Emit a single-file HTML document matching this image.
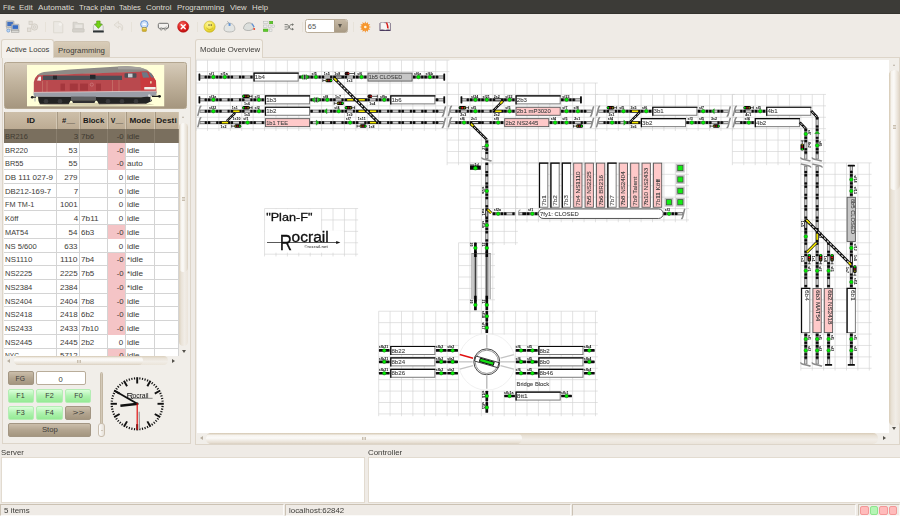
<!DOCTYPE html><html><head><meta charset="utf-8"><title>Rocrail</title><style>
*{box-sizing:border-box;margin:0;padding:0}
html,body{width:900px;height:516px;overflow:hidden;background:#efebe6;font-family:"Liberation Sans",sans-serif;font-size:7.6px;color:#3c3b37}
.abs{position:absolute}
#menubar{left:0;top:0;width:900px;height:14px;background:#3c3b37;border-bottom:1px solid #33322e}
#menubar>span{position:absolute;top:2.6px;color:#dfdbd2;font-size:7.7px;white-space:nowrap}
.tab{position:absolute;border:1px solid #dcd4c7;border-bottom:none;border-radius:3px 3px 0 0;white-space:nowrap;font-size:7.6px}
.tab.sel{background:#f4f1ec;color:#3c3b37}
.tab.unsel{background:linear-gradient(#d8ccb8,#c9bba4);color:#3c3b37;border-color:#cfc3b0}
.frame{position:absolute;border:1px solid #ddd5c9;background:#efebe6}
.btn{position:absolute;border:1px solid #a39683;border-radius:2px;background:linear-gradient(#cbbeab,#b3a590 50%,#a4967f);color:#3c3b37;text-align:center;font-size:7.6px;white-space:nowrap}
.gbtn{position:absolute;border:1px solid #b4edb4;border-radius:2px;background:linear-gradient(#dcffdc,#aef2ae 50%,#95ea95);color:#3c3b37;text-align:center;font-size:7.6px}
.white{position:absolute;background:#fff;border:1px solid #e2dbd0}
.lbl{position:absolute;white-space:nowrap;font-size:7.6px;color:#3c3b37}
.sep{position:absolute;width:1px;top:21.5px;height:10px;background:#e7e2d9}
#lt{position:absolute;left:4px;top:112px;width:175px;height:244.2px;overflow:hidden;background:#fff}
#lt .h{position:absolute;top:0;height:17.1px;background:linear-gradient(#cdbfa9,#bcab93);border-right:1px solid #d3c7b4;border-left:1px solid #a89a84;font-weight:bold;font-size:7.8px;text-align:center;padding-top:4.2px;color:#1a1917;white-space:nowrap;overflow:hidden}
#lt .r{position:absolute;left:0;width:175px;height:13.72px;border-bottom:1px solid #d4d4d4}
#lt .c{position:absolute;top:0;height:13.72px;border-right:1px solid #d4d4d4;padding-top:2.8px;font-size:7.5px;white-space:nowrap;overflow:hidden;color:#3c3b37}
#lt .sel .c{color:#3f3a31;border-right-color:#8a7f6e}
#lt .sel{background:#7a6f5e;border-bottom-color:#7a6f5e}
.sb{position:absolute;background:linear-gradient(90deg,#e4ddd2,#f3f0eb);border-radius:4px;border:1px solid #d6cdbf}
.sbh{position:absolute;background:linear-gradient(#e4ddd2,#f3f0eb);border-radius:4px;border:1px solid #d6cdbf}
.th{position:absolute;background:linear-gradient(90deg,#fdfcfb,#e6dfd5);border-radius:4px;border:1px solid #d4cabb}
.thh{position:absolute;background:linear-gradient(#fdfcfb,#e6dfd5);border-radius:4px;border:1px solid #d4cabb}
.sf{position:absolute;top:504px;height:12px;border:1px solid #cbc2b4;border-right-color:#fbfaf8;border-bottom-color:#fbfaf8;font-size:7.4px;padding:1.3px 0 0 2.5px;color:#3c3b37;white-space:nowrap}
</style></head><body>
<div id="menubar" class="abs">
<span style="left:3px"><span style="display:inline-block;transform-origin:0 50%;transform:scaleX(0.951)">File</span></span>
<span style="left:19px"><span style="display:inline-block;transform-origin:0 50%;transform:scaleX(1.029)">Edit</span></span>
<span style="left:38px"><span style="display:inline-block;transform-origin:0 50%;transform:scaleX(1.056)">Automatic</span></span>
<span style="left:79.3px"><span style="display:inline-block;transform-origin:0 50%;transform:scaleX(1.007)">Track plan</span></span>
<span style="left:119.3px"><span style="display:inline-block;transform-origin:0 50%;transform:scaleX(0.984)">Tables</span></span>
<span style="left:146.3px"><span style="display:inline-block;transform-origin:0 50%;transform:scaleX(1.027)">Control</span></span>
<span style="left:176.8px"><span style="display:inline-block;transform-origin:0 50%;transform:scaleX(1.028)">Programming</span></span>
<span style="left:230px"><span style="display:inline-block;transform-origin:0 50%;transform:scaleX(1.011)">View</span></span>
<span style="left:251.5px"><span style="display:inline-block;transform-origin:0 50%;transform:scaleX(1.015)">Help</span></span>
</div>
<div class="sep" style="left:45px"></div>
<div class="sep" style="left:130.5px"></div>
<div class="sep" style="left:196.5px"></div>
<div class="sep" style="left:301.5px"></div>
<div class="sep" style="left:352.5px"></div>
<div class="abs" style="left:305.2px;top:19.2px;width:42.8px;height:14px;border:1px solid #b9ad9a;border-radius:2.5px;background:#fff;overflow:hidden"><div class="abs" style="left:27.5px;top:0;width:15px;height:12px;background:linear-gradient(#c6b9a5,#a99b85);border-left:1px solid #b0a28d"></div><div class="abs" style="left:32px;top:4.2px;width:0;height:0;border-left:2.6px solid transparent;border-right:2.6px solid transparent;border-top:4px solid #5a554c"></div><div class="abs" style="left:1.6px;top:2.3px;font-size:7.5px;color:#555">65</div></div>
<svg class="abs" style="left:0;top:0" width="900" height="516" viewBox="0 0 900 516"><rect x="6.3" y="21" width="7.6" height="6.2" rx=".6" fill="#c9ccd0" stroke="#8e9399" stroke-width=".6"/><rect x="7.3" y="22" width="5.6" height="4" fill="#3f6fc0"/><rect x="6.8" y="27.6" width="6" height="1.6" fill="#d6d6d2" stroke="#9a9a96" stroke-width=".4"/><rect x="11.6" y="24.3" width="7.3" height="5.6" rx=".6" fill="#d3d6da" stroke="#8e9399" stroke-width=".6"/><rect x="12.5" y="25.2" width="5.5" height="3.7" fill="#356bc4"/><rect x="11.4" y="30.2" width="7.6" height="2" fill="#dcdcd8" stroke="#8f8f8b" stroke-width=".5"/><circle cx="8.3" cy="30.6" r="1.5" fill="#bcd6f3" stroke="#5b8ed0" stroke-width=".6"/><g fill="#e4e0da" stroke="#cfc9c0" stroke-width=".7"><rect x="29" y="21.2" width="3.2" height="3.2"/><rect x="27.5" y="28" width="3.4" height="3.4"/><circle cx="34.5" cy="27" r="3.2"/><circle cx="34.5" cy="27" r="1.1" fill="#efebe6"/></g><path d="M53.6 21.6h6.6l2.6 2.6v8.6h-9.2z" fill="#ebe8e3" stroke="#d9d4cc" stroke-width=".7"/><circle cx="60.3" cy="24.3" r="1.6" fill="#f4f2ee"/><path d="M73 22.2h4l1 1.4h5.4v8.2H73z" fill="#d9d6d0" stroke="#c8c4bc" stroke-width=".6"/><rect x="75.3" y="24.6" width="7" height="3.4" fill="#e8e5e0"/><rect x="72.6" y="28.8" width="11.6" height="3.2" rx=".5" fill="#d5d2cc" stroke="#c5c1b9" stroke-width=".5"/><path d="M93.4 26.2l1.6-2.6h6.6l1.6 2.6v4.6H93.4z" fill="#eeeeec" stroke="#a0a09c" stroke-width=".6"/><rect x="93" y="30.4" width="10.8" height="2.2" rx=".5" fill="#2e3436"/><path d="M96.7 21h3.4v3.3h2.1l-3.8 4.1l-3.8-4.1h2.1z" fill="#73d216" stroke="#4e9a06" stroke-width=".6"/><path d="M118.5 21.3l-4.4 3.6l4.4 3.4v-2c2.3 0 3.4 1.2 3.4 4.2c1.8-3.4.6-6.9-3.4-6.9z" fill="#ebe7e1" stroke="#d8d2c9" stroke-width=".7"/><circle cx="144.3" cy="24.3" r="3.7" fill="#cfe0f7" stroke="#5c8fd6" stroke-width=".9"/><rect x="142.6" y="23.6" width="3.4" height="1.3" rx=".4" fill="#fff"/><rect x="142.2" y="27.6" width="4.2" height="3.8" rx=".6" fill="#d4b32c" stroke="#a88a1a" stroke-width=".5"/><rect x="142.7" y="28" width="3.2" height="1.2" fill="#f1dc7a"/><path d="M159.6 23.3h7.6q1.3 0 1.3 1.3v2.6q0 1.2-1.3 1.2h-7.6q-1.3 0-1.3-1.2v-2.6q0-1.3 1.3-1.3z" fill="#f4f2ef" stroke="#6e6e6c" stroke-width="1"/><circle cx="161.2" cy="29" r="1.1" fill="#f4f2ef" stroke="#6e6e6c" stroke-width=".7"/><circle cx="165.2" cy="29" r="1.1" fill="#f4f2ef" stroke="#6e6e6c" stroke-width=".7"/><path d="M166.3 26.5l1.4 1.4" stroke="#6e6e6c" stroke-width=".6"/><defs><radialGradient id="rg" cx=".4" cy=".3" r=".8"><stop offset="0" stop-color="#f4655c"/><stop offset=".6" stop-color="#dc1c1c"/><stop offset="1" stop-color="#a80d0d"/></radialGradient><radialGradient id="yg" cx=".4" cy=".3" r=".8"><stop offset="0" stop-color="#fdf7a0"/><stop offset=".6" stop-color="#f1df3a"/><stop offset="1" stop-color="#c9b418"/></radialGradient></defs><circle cx="183.2" cy="26.7" r="5.6" fill="url(#rg)" stroke="#b01010" stroke-width=".5"/><path d="M181.2 24.7l4 4m0-4l-4 4" stroke="#fff" stroke-width="1.5" stroke-linecap="round"/><circle cx="209.6" cy="26.7" r="5.6" fill="url(#yg)" stroke="#c8b52a" stroke-width=".6"/><rect x="208.5" y="24.2" width="1" height="1.7" fill="#5a5030"/><rect x="210.7" y="24.2" width="1" height="1.7" fill="#5a5030"/><path d="M206.3 27.8q3.3 3.6 6.6 0" fill="none" stroke="#b9a525" stroke-width=".7"/><path d="M224 29.2c0-3.6 2.3-6 5.4-6s5.5 2.4 5.5 6c0 1.8-2.4 2.8-5.5 2.8s-5.4-1-5.4-2.8z" fill="#e3e5e3" stroke="#9c9e9c" stroke-width=".6"/><path d="M229.6 25.6c.3-1.800-.8-3.400-2.600-4.200" fill="none" stroke="#7a8a99" stroke-width=".6"/><path d="M228.600 23.300h1.900v2.600h-1.900z" fill="#5c92d8"/><path d="M243.600 27.600c.8-3.200 3-5 5.800-4.800s4.600 2 4.200 4.800c-.3 2-2.400 3-5.400 2.900s-5-.9-4.600-2.900z" fill="#dcdfdc" stroke="#8f9290" stroke-width=".6"/><path d="M251.800 23.600l2.400 3.400" stroke="#5c8fd6" stroke-width="1.200"/><circle cx="254.200" cy="29" r="1" fill="#e8452c"/><g stroke="#a9aca8" stroke-width=".4"><rect x="263.400" y="21.200" width="4.600" height="2.300" fill="#ecedeb"/><rect x="269.600" y="21.200" width="3.200" height="2.600" fill="#5dc92b" stroke="#3f9e14"/><rect x="263.400" y="25" width="3.600" height="2.600" fill="#ecedeb"/><rect x="268.400" y="25" width="2.600" height="2.600" fill="#ecedeb"/><rect x="272" y="25" width="2.800" height="2.600" fill="#ecedeb"/><rect x="263.200" y="29" width="4.800" height="2.600" fill="#5dc92b" stroke="#3f9e14"/><rect x="269.600" y="29" width="2.400" height="2.600" fill="#ecedeb"/></g><g fill="none" stroke="#73756f" stroke-width=".9"><path d="M284.600 24.600h3l3 4.600h2.400"/><path d="M284.600 29.200h3l3-4.600h2.400"/><path d="M284.600 26.900h3.200"/></g><g fill="#73756f"><path d="M292 23.200l2 1.400l-2 1.400zM292 27.800l2 1.400l-2 1.400z"/></g><path d="M368.59 26.13L371.00 27.00L368.59 27.87ZM368.58 27.89L370.24 29.85L367.71 29.40ZM367.70 29.41L368.15 31.94L366.19 30.28ZM366.17 30.29L365.30 32.70L364.43 30.29ZM364.41 30.28L362.45 31.94L362.90 29.41ZM362.89 29.40L360.36 29.85L362.02 27.89ZM362.01 27.87L359.60 27.00L362.01 26.13ZM362.02 26.11L360.36 24.15L362.89 24.60ZM362.90 24.59L362.45 22.06L364.41 23.72ZM364.43 23.71L365.30 21.30L366.17 23.71ZM366.19 23.72L368.15 22.06L367.70 24.59ZM367.71 24.60L370.24 24.15L368.58 26.11Z" fill="#f28a1e"/><circle cx="365.300" cy="27" r="3.800" fill="#f7962c"/><circle cx="365.300" cy="27" r="1.300" fill="#fff3d8"/><path d="M379.600 23.400l1-.8h9l1 .8v7.600h-11z" fill="#4a3a5e"/><path d="M380.400 23c1.800-.8 3.400-.7 4.800.3c1.400-1 3-1.100 4.800-.3v6.800c-1.800-.6-3.400-.5-4.800.3c-1.400-.8-3-.9-4.800-.3z" fill="#f6f6f4" stroke="#b9b9b5" stroke-width=".3"/><path d="M385.800 22.400c.6 2 1.400 3.400 1.200 6.400l.9-.7l.7 1c.3-3-.6-4.700-1.300-6.700z" fill="#d8201c"/></svg>
<div class="frame" style="left:1.5px;top:57.2px;width:189.5px;height:386.8px;background:#f1eee9"></div>
<div class="tab unsel" style="left:53px;top:40.8px;width:56.5px;height:16.6px;padding:4.3px 0 0 3.6px"><span style="display:inline-block;transform-origin:0 50%;transform:scaleX(1.027)">Programming</span></div>
<div class="tab sel" style="left:1px;top:39px;width:52.5px;height:19.3px;padding:4.7px 0 0 3.8px"><span style="display:inline-block;transform-origin:0 50%;transform:scaleX(1.007)">Active Locos</span></div>
<div class="abs" style="left:3.9px;top:62.1px;width:183px;height:46.5px;border-radius:2.5px;border:1px solid #b3a690;background:linear-gradient(#d6cbb9,#c0b29c 45%,#a5967f)"></div>
<svg class="abs" style="left:0;top:0" width="900" height="516" viewBox="0 0 900 516">
<rect x="27" y="64.9" width="137.200" height="41.400" fill="#ffffd8"/>
<ellipse cx="96" cy="104.300" rx="58" ry="1.600" fill="#d9d2b0"/>
<path d="M36.500 76.500 Q38 73 44 72 L70 69.600 L118 66.600 L128 66.300 L140 67.400 L147 69.800 L149.500 72 L40 75.200 Z" fill="#8d8a86"/>
<path d="M118 66.600 L126 65.900 L140 67.200 L146 69.400 L118 69.200Z" fill="#a3a09c"/>
<path d="M33.800 93 L33.800 82 Q34.500 77.500 37.500 75.300 L147 71.500 Q152 73 153.500 77 L156 81 L156.300 93 Z" fill="#b9494e"/>
<path d="M140 71.800 L148 71.600 Q152.500 73.600 154 78 L156 81 L156.300 93 L141 93 Z" fill="#c93a3e"/>
<rect x="43" y="75.700" width="79" height="4.300" fill="#4b4e55"/>
<rect x="53" y="75.700" width="4" height="3.600" fill="#25272b"/><rect x="90" y="74.800" width="5.500" height="4" fill="#25272b"/>
<path d="M37 80.500 L38.800 76.800 L41 76.500 L41 80.700Z" fill="#f2f2ee"/>
<rect x="124.500" y="73.200" width="12" height="4.600" rx=".8" fill="#4d5056"/><rect x="128" y="73.600" width="4.500" height="3.800" fill="#c9cdd3"/>
<path d="M141.500 72.300 L147 72.200 L149.500 77.500 L143 77.700Z" fill="#6d7885"/><path d="M148.500 72.500 L150.800 72.800 L154 77.600 L151.300 77.600Z" fill="#6d7885"/>
<rect x="60.500" y="83.600" width="4.500" height="7" fill="#a4373d"/><rect x="69.800" y="83.600" width="8" height="7" fill="#a4373d"/><rect x="80" y="83.600" width="8" height="7" fill="#a4373d"/><rect x="96" y="83.600" width="5" height="7" fill="#a4373d"/>
<circle cx="91.800" cy="84.600" r="1.600" fill="none" stroke="#d8a0a0" stroke-width=".4"/>
<path d="M47 81v11M42.500 81v11M112.500 80v12M119 80v12" stroke="#cf8a7a" stroke-width=".5"/>
<rect x="144.200" y="87" width="11.500" height="2.600" rx=".6" fill="#f0efea"/>
<rect x="150" y="81.200" width="1.700" height="2.300" fill="#e8c8a8"/>
<path d="M33.600 92.500 L156.500 91.200 L156.500 95 Q150 97.500 141 97.300 L35 96.800 L33.600 95Z" fill="#9b9ea8"/>
<path d="M33.600 92.400 L156.500 91.100" stroke="#e7e2e0" stroke-width=".7"/>
<path d="M38 96.700 L141 97.200 L150 96.500 L152 101 L146 103.800 L99 104.200 L97 100.800 L70.500 100.800 L68.500 104.300 L40 104.300 L38.500 101 Z" fill="#232323"/><path d="M72 100.800h23.500l-1 2.200h-21.500z" fill="#2e2e30"/><path d="M40 104.300h28M99 104.200h46" stroke="#cbb8a8" stroke-width=".5"/><g fill="#3a3a3c"><circle cx="46" cy="101.300" r="2.300"/><circle cx="60" cy="101.300" r="2.300"/><circle cx="108" cy="101.300" r="2.300"/><circle cx="122" cy="101.300" r="2.300"/><circle cx="136" cy="101.300" r="2.300"/></g>
<rect x="71" y="96.600" width="25" height="3.600" fill="#5e5e60"/>
<circle cx="32.200" cy="97.200" r="1.300" fill="#1a1a1a"/><rect x="32" y="96.600" width="4" height="1.200" fill="#2a2a2a"/>
<rect x="152" y="95.700" width="7" height="1.300" fill="#1a1a1a"/><circle cx="159.500" cy="96.300" r="1.400" fill="#1a1a1a"/><circle cx="149.300" cy="95.600" r="1.300" fill="#ddd"/>
<path d="M35 98v3.500M150.500 98v3" stroke="#9b9ea8" stroke-width=".8"/>
</svg>
<div id="lt"><div class="h" style="left:0px;width:53.3px"><span style="display:inline-block;transform-origin:50% 50%;transform:scaleX(1.071)">ID</span></div><div class="h" style="left:53.3px;width:23px"><span style="display:inline-block;transform-origin:50% 50%;transform:scaleX(0.982)">#__</span></div><div class="h" style="left:76.3px;width:27.3px"><span style="display:inline-block;transform-origin:50% 50%;transform:scaleX(0.998)">Block</span></div><div class="h" style="left:103.6px;width:18.5px"><span style="display:inline-block;transform-origin:50% 50%;transform:scaleX(0.888)">V__</span></div><div class="h" style="left:122.1px;width:28.6px"><span style="display:inline-block;transform-origin:50% 50%;transform:scaleX(1.050)">Mode</span></div><div class="h" style="left:150.7px;width:24.3px"><span style="display:inline-block;transform-origin:50% 50%;transform:scaleX(1.066)">Desti</span></div><div class="r sel" style="top:17.1px"><div class="c" style="left:0px;width:53.3px;padding-left:1.2px;"><span style="display:inline-block;transform-origin:0 50%;transform:scaleX(0.997)">BR216</span></div><div class="c" style="left:53.3px;width:23px;text-align:right;padding-right:1.5px;"><span style="display:inline-block;transform-origin:100% 50%;transform:scaleX(1.060)">3</span></div><div class="c" style="left:76.3px;width:27.3px;padding-left:1.2px;"><span style="display:inline-block;transform-origin:0 50%;transform:scaleX(1.059)">7b6</span></div><div class="c" style="left:103.6px;width:18.5px;text-align:right;padding-right:1.5px;"><span style="display:inline-block;transform-origin:100% 50%;transform:scaleX(1.039)">-0</span></div><div class="c" style="left:122.1px;width:28.6px;padding-left:1.2px;"><span style="display:inline-block;transform-origin:0 50%;transform:scaleX(1.075)">idle</span></div><div class="c" style="left:150.7px;width:24.3px;padding-left:1.2px;"></div></div><div class="r" style="top:30.82px"><div class="c" style="left:0px;width:53.3px;padding-left:1.2px;"><span style="display:inline-block;transform-origin:0 50%;transform:scaleX(0.997)">BR220</span></div><div class="c" style="left:53.3px;width:23px;text-align:right;padding-right:1.5px;"><span style="display:inline-block;transform-origin:100% 50%;transform:scaleX(1.060)">53</span></div><div class="c" style="left:76.3px;width:27.3px;padding-left:1.2px;"></div><div class="c" style="left:103.6px;width:18.5px;text-align:right;padding-right:1.5px;background:#f4c4c6;"><span style="display:inline-block;transform-origin:100% 50%;transform:scaleX(1.039)">-0</span></div><div class="c" style="left:122.1px;width:28.6px;padding-left:1.2px;"><span style="display:inline-block;transform-origin:0 50%;transform:scaleX(1.075)">idle</span></div><div class="c" style="left:150.7px;width:24.3px;padding-left:1.2px;"></div></div><div class="r" style="top:44.54px"><div class="c" style="left:0px;width:53.3px;padding-left:1.2px;"><span style="display:inline-block;transform-origin:0 50%;transform:scaleX(0.983)">BR55</span></div><div class="c" style="left:53.3px;width:23px;text-align:right;padding-right:1.5px;"><span style="display:inline-block;transform-origin:100% 50%;transform:scaleX(1.060)">55</span></div><div class="c" style="left:76.3px;width:27.3px;padding-left:1.2px;"></div><div class="c" style="left:103.6px;width:18.5px;text-align:right;padding-right:1.5px;background:#f4c4c6;"><span style="display:inline-block;transform-origin:100% 50%;transform:scaleX(1.039)">-0</span></div><div class="c" style="left:122.1px;width:28.6px;padding-left:1.2px;"><span style="display:inline-block;transform-origin:0 50%;transform:scaleX(1.072)">auto</span></div><div class="c" style="left:150.7px;width:24.3px;padding-left:1.2px;"></div></div><div class="r" style="top:58.26px"><div class="c" style="left:0px;width:53.3px;padding-left:1.2px;"><span style="display:inline-block;transform-origin:0 50%;transform:scaleX(1.063)">DB 111 027-9</span></div><div class="c" style="left:53.3px;width:23px;text-align:right;padding-right:1.5px;"><span style="display:inline-block;transform-origin:100% 50%;transform:scaleX(1.060)">279</span></div><div class="c" style="left:76.3px;width:27.3px;padding-left:1.2px;"></div><div class="c" style="left:103.6px;width:18.5px;text-align:right;padding-right:1.5px;"><span style="display:inline-block;transform-origin:100% 50%;transform:scaleX(1.060)">0</span></div><div class="c" style="left:122.1px;width:28.6px;padding-left:1.2px;"><span style="display:inline-block;transform-origin:0 50%;transform:scaleX(1.075)">idle</span></div><div class="c" style="left:150.7px;width:24.3px;padding-left:1.2px;"></div></div><div class="r" style="top:71.98px"><div class="c" style="left:0px;width:53.3px;padding-left:1.2px;"><span style="display:inline-block;transform-origin:0 50%;transform:scaleX(1.033)">DB212-169-7</span></div><div class="c" style="left:53.3px;width:23px;text-align:right;padding-right:1.5px;"><span style="display:inline-block;transform-origin:100% 50%;transform:scaleX(1.060)">7</span></div><div class="c" style="left:76.3px;width:27.3px;padding-left:1.2px;"></div><div class="c" style="left:103.6px;width:18.5px;text-align:right;padding-right:1.5px;"><span style="display:inline-block;transform-origin:100% 50%;transform:scaleX(1.060)">0</span></div><div class="c" style="left:122.1px;width:28.6px;padding-left:1.2px;"><span style="display:inline-block;transform-origin:0 50%;transform:scaleX(1.075)">idle</span></div><div class="c" style="left:150.7px;width:24.3px;padding-left:1.2px;"></div></div><div class="r" style="top:85.7px"><div class="c" style="left:0px;width:53.3px;padding-left:1.2px;"><span style="display:inline-block;transform-origin:0 50%;transform:scaleX(0.970)">FM TM-1</span></div><div class="c" style="left:53.3px;width:23px;text-align:right;padding-right:1.5px;"><span style="display:inline-block;transform-origin:100% 50%;transform:scaleX(1.060)">1001</span></div><div class="c" style="left:76.3px;width:27.3px;padding-left:1.2px;"></div><div class="c" style="left:103.6px;width:18.5px;text-align:right;padding-right:1.5px;"><span style="display:inline-block;transform-origin:100% 50%;transform:scaleX(1.060)">0</span></div><div class="c" style="left:122.1px;width:28.6px;padding-left:1.2px;"><span style="display:inline-block;transform-origin:0 50%;transform:scaleX(1.075)">idle</span></div><div class="c" style="left:150.7px;width:24.3px;padding-left:1.2px;"></div></div><div class="r" style="top:99.42px"><div class="c" style="left:0px;width:53.3px;padding-left:1.2px;"><span style="display:inline-block;transform-origin:0 50%;transform:scaleX(1.004)">Köff</span></div><div class="c" style="left:53.3px;width:23px;text-align:right;padding-right:1.5px;"><span style="display:inline-block;transform-origin:100% 50%;transform:scaleX(1.060)">4</span></div><div class="c" style="left:76.3px;width:27.3px;padding-left:1.2px;"><span style="display:inline-block;transform-origin:0 50%;transform:scaleX(1.096)">7b11</span></div><div class="c" style="left:103.6px;width:18.5px;text-align:right;padding-right:1.5px;"><span style="display:inline-block;transform-origin:100% 50%;transform:scaleX(1.060)">0</span></div><div class="c" style="left:122.1px;width:28.6px;padding-left:1.2px;"><span style="display:inline-block;transform-origin:0 50%;transform:scaleX(1.075)">idle</span></div><div class="c" style="left:150.7px;width:24.3px;padding-left:1.2px;"></div></div><div class="r" style="top:113.14px"><div class="c" style="left:0px;width:53.3px;padding-left:1.2px;"><span style="display:inline-block;transform-origin:0 50%;transform:scaleX(0.987)">MAT54</span></div><div class="c" style="left:53.3px;width:23px;text-align:right;padding-right:1.5px;"><span style="display:inline-block;transform-origin:100% 50%;transform:scaleX(1.060)">54</span></div><div class="c" style="left:76.3px;width:27.3px;padding-left:1.2px;"><span style="display:inline-block;transform-origin:0 50%;transform:scaleX(1.059)">6b3</span></div><div class="c" style="left:103.6px;width:18.5px;text-align:right;padding-right:1.5px;background:#f4c4c6;"><span style="display:inline-block;transform-origin:100% 50%;transform:scaleX(1.039)">-0</span></div><div class="c" style="left:122.1px;width:28.6px;padding-left:1.2px;"><span style="display:inline-block;transform-origin:0 50%;transform:scaleX(1.075)">idle</span></div><div class="c" style="left:150.7px;width:24.3px;padding-left:1.2px;"></div></div><div class="r" style="top:126.86px"><div class="c" style="left:0px;width:53.3px;padding-left:1.2px;"><span style="display:inline-block;transform-origin:0 50%;transform:scaleX(1.018)">NS 5/600</span></div><div class="c" style="left:53.3px;width:23px;text-align:right;padding-right:1.5px;"><span style="display:inline-block;transform-origin:100% 50%;transform:scaleX(1.060)">633</span></div><div class="c" style="left:76.3px;width:27.3px;padding-left:1.2px;"></div><div class="c" style="left:103.6px;width:18.5px;text-align:right;padding-right:1.5px;"><span style="display:inline-block;transform-origin:100% 50%;transform:scaleX(1.060)">0</span></div><div class="c" style="left:122.1px;width:28.6px;padding-left:1.2px;"><span style="display:inline-block;transform-origin:0 50%;transform:scaleX(1.075)">idle</span></div><div class="c" style="left:150.7px;width:24.3px;padding-left:1.2px;"></div></div><div class="r" style="top:140.58px"><div class="c" style="left:0px;width:53.3px;padding-left:1.2px;"><span style="display:inline-block;transform-origin:0 50%;transform:scaleX(1.050)">NS1110</span></div><div class="c" style="left:53.3px;width:23px;text-align:right;padding-right:1.5px;"><span style="display:inline-block;transform-origin:100% 50%;transform:scaleX(1.136)">1110</span></div><div class="c" style="left:76.3px;width:27.3px;padding-left:1.2px;"><span style="display:inline-block;transform-origin:0 50%;transform:scaleX(1.059)">7b4</span></div><div class="c" style="left:103.6px;width:18.5px;text-align:right;padding-right:1.5px;background:#f4c4c6;"><span style="display:inline-block;transform-origin:100% 50%;transform:scaleX(1.039)">-0</span></div><div class="c" style="left:122.1px;width:28.6px;padding-left:1.2px;"><span style="display:inline-block;transform-origin:0 50%;transform:scaleX(1.098)">*idle</span></div><div class="c" style="left:150.7px;width:24.3px;padding-left:1.2px;"></div></div><div class="r" style="top:154.3px"><div class="c" style="left:0px;width:53.3px;padding-left:1.2px;"><span style="display:inline-block;transform-origin:0 50%;transform:scaleX(1.007)">NS2225</span></div><div class="c" style="left:53.3px;width:23px;text-align:right;padding-right:1.5px;"><span style="display:inline-block;transform-origin:100% 50%;transform:scaleX(1.060)">2225</span></div><div class="c" style="left:76.3px;width:27.3px;padding-left:1.2px;"><span style="display:inline-block;transform-origin:0 50%;transform:scaleX(1.059)">7b5</span></div><div class="c" style="left:103.6px;width:18.5px;text-align:right;padding-right:1.5px;background:#f4c4c6;"><span style="display:inline-block;transform-origin:100% 50%;transform:scaleX(1.039)">-0</span></div><div class="c" style="left:122.1px;width:28.6px;padding-left:1.2px;"><span style="display:inline-block;transform-origin:0 50%;transform:scaleX(1.098)">*idle</span></div><div class="c" style="left:150.7px;width:24.3px;padding-left:1.2px;"></div></div><div class="r" style="top:168.02px"><div class="c" style="left:0px;width:53.3px;padding-left:1.2px;"><span style="display:inline-block;transform-origin:0 50%;transform:scaleX(1.007)">NS2384</span></div><div class="c" style="left:53.3px;width:23px;text-align:right;padding-right:1.5px;"><span style="display:inline-block;transform-origin:100% 50%;transform:scaleX(1.060)">2384</span></div><div class="c" style="left:76.3px;width:27.3px;padding-left:1.2px;"></div><div class="c" style="left:103.6px;width:18.5px;text-align:right;padding-right:1.5px;background:#f4c4c6;"><span style="display:inline-block;transform-origin:100% 50%;transform:scaleX(1.039)">-0</span></div><div class="c" style="left:122.1px;width:28.6px;padding-left:1.2px;"><span style="display:inline-block;transform-origin:0 50%;transform:scaleX(1.098)">*idle</span></div><div class="c" style="left:150.7px;width:24.3px;padding-left:1.2px;"></div></div><div class="r" style="top:181.74px"><div class="c" style="left:0px;width:53.3px;padding-left:1.2px;"><span style="display:inline-block;transform-origin:0 50%;transform:scaleX(1.007)">NS2404</span></div><div class="c" style="left:53.3px;width:23px;text-align:right;padding-right:1.5px;"><span style="display:inline-block;transform-origin:100% 50%;transform:scaleX(1.060)">2404</span></div><div class="c" style="left:76.3px;width:27.3px;padding-left:1.2px;"><span style="display:inline-block;transform-origin:0 50%;transform:scaleX(1.059)">7b8</span></div><div class="c" style="left:103.6px;width:18.5px;text-align:right;padding-right:1.5px;background:#f4c4c6;"><span style="display:inline-block;transform-origin:100% 50%;transform:scaleX(1.039)">-0</span></div><div class="c" style="left:122.1px;width:28.6px;padding-left:1.2px;"><span style="display:inline-block;transform-origin:0 50%;transform:scaleX(1.075)">idle</span></div><div class="c" style="left:150.7px;width:24.3px;padding-left:1.2px;"></div></div><div class="r" style="top:195.46px"><div class="c" style="left:0px;width:53.3px;padding-left:1.2px;"><span style="display:inline-block;transform-origin:0 50%;transform:scaleX(1.007)">NS2418</span></div><div class="c" style="left:53.3px;width:23px;text-align:right;padding-right:1.5px;"><span style="display:inline-block;transform-origin:100% 50%;transform:scaleX(1.060)">2418</span></div><div class="c" style="left:76.3px;width:27.3px;padding-left:1.2px;"><span style="display:inline-block;transform-origin:0 50%;transform:scaleX(1.059)">6b2</span></div><div class="c" style="left:103.6px;width:18.5px;text-align:right;padding-right:1.5px;background:#f4c4c6;"><span style="display:inline-block;transform-origin:100% 50%;transform:scaleX(1.039)">-0</span></div><div class="c" style="left:122.1px;width:28.6px;padding-left:1.2px;"><span style="display:inline-block;transform-origin:0 50%;transform:scaleX(1.075)">idle</span></div><div class="c" style="left:150.7px;width:24.3px;padding-left:1.2px;"></div></div><div class="r" style="top:209.18px"><div class="c" style="left:0px;width:53.3px;padding-left:1.2px;"><span style="display:inline-block;transform-origin:0 50%;transform:scaleX(1.007)">NS2433</span></div><div class="c" style="left:53.3px;width:23px;text-align:right;padding-right:1.5px;"><span style="display:inline-block;transform-origin:100% 50%;transform:scaleX(1.060)">2433</span></div><div class="c" style="left:76.3px;width:27.3px;padding-left:1.2px;"><span style="display:inline-block;transform-origin:0 50%;transform:scaleX(1.060)">7b10</span></div><div class="c" style="left:103.6px;width:18.5px;text-align:right;padding-right:1.5px;background:#f4c4c6;"><span style="display:inline-block;transform-origin:100% 50%;transform:scaleX(1.039)">-0</span></div><div class="c" style="left:122.1px;width:28.6px;padding-left:1.2px;"><span style="display:inline-block;transform-origin:0 50%;transform:scaleX(1.075)">idle</span></div><div class="c" style="left:150.7px;width:24.3px;padding-left:1.2px;"></div></div><div class="r" style="top:222.9px"><div class="c" style="left:0px;width:53.3px;padding-left:1.2px;"><span style="display:inline-block;transform-origin:0 50%;transform:scaleX(1.007)">NS2445</span></div><div class="c" style="left:53.3px;width:23px;text-align:right;padding-right:1.5px;"><span style="display:inline-block;transform-origin:100% 50%;transform:scaleX(1.060)">2445</span></div><div class="c" style="left:76.3px;width:27.3px;padding-left:1.2px;"><span style="display:inline-block;transform-origin:0 50%;transform:scaleX(1.059)">2b2</span></div><div class="c" style="left:103.6px;width:18.5px;text-align:right;padding-right:1.5px;"><span style="display:inline-block;transform-origin:100% 50%;transform:scaleX(1.060)">0</span></div><div class="c" style="left:122.1px;width:28.6px;padding-left:1.2px;"><span style="display:inline-block;transform-origin:0 50%;transform:scaleX(1.075)">idle</span></div><div class="c" style="left:150.7px;width:24.3px;padding-left:1.2px;"></div></div><div class="r" style="top:236.62px"><div class="c" style="left:0px;width:53.3px;padding-left:1.2px;"><span style="display:inline-block;transform-origin:0 50%;transform:scaleX(0.879)">NYC</span></div><div class="c" style="left:53.3px;width:23px;text-align:right;padding-right:1.5px;"><span style="display:inline-block;transform-origin:100% 50%;transform:scaleX(1.060)">5712</span></div><div class="c" style="left:76.3px;width:27.3px;padding-left:1.2px;"></div><div class="c" style="left:103.6px;width:18.5px;text-align:right;padding-right:1.5px;background:#f4c4c6;"><span style="display:inline-block;transform-origin:100% 50%;transform:scaleX(1.039)">-0</span></div><div class="c" style="left:122.1px;width:28.6px;padding-left:1.2px;"><span style="display:inline-block;transform-origin:0 50%;transform:scaleX(1.075)">idle</span></div><div class="c" style="left:150.7px;width:24.3px;padding-left:1.2px;"></div></div></div>
<div class="abs" style="left:179.2px;top:123.4px;width:8.6px;height:222.3px;border-radius:4.3px;background:linear-gradient(90deg,#dbd0bd,#e9e2d7 25%,#f1ede7 60%,#ebe4da)"></div>
<div class="abs" style="left:179.2px;top:123.4px;width:8.6px;height:148.4px;border-radius:4.3px;background:linear-gradient(90deg,#d3c6b0,#f6f3ee 22%,#fbfaf8 45%,#e6ded2 88%,#d8cebf)"></div>
<div class="abs" style="left:182px;top:197px;width:3px;height:.7px;background:#c9bfb0;box-shadow:0 1.5px #c9bfb0,0 3px #c9bfb0"></div>
<div class="abs" style="left:181.6px;top:116.2px;border-left:1.8px solid transparent;border-right:1.8px solid transparent;border-bottom:2.6px solid #b9b0a2"></div>
<div class="abs" style="left:181.6px;top:349.8px;border-left:2px solid transparent;border-right:2px solid transparent;border-top:3px solid #55524c"></div>
<div class="abs" style="left:14px;top:356.4px;width:153.5px;height:8.6px;border-radius:4.3px;background:linear-gradient(#dbd0bd,#e9e2d7 25%,#f1ede7 60%,#ebe4da)"></div>
<div class="abs" style="left:14px;top:356.4px;width:129px;height:8.6px;border-radius:4.3px;background:linear-gradient(#d3c6b0,#f6f3ee 22%,#fbfaf8 45%,#e6ded2 88%,#d8cebf)"></div>
<div class="abs" style="left:76.5px;top:359.5px;width:.7px;height:3px;background:#c9bfb0;box-shadow:1.5px 0 #c9bfb0,3px 0 #c9bfb0"></div>
<div class="abs" style="left:7.3px;top:358.8px;border-top:2.2px solid transparent;border-bottom:2.2px solid transparent;border-right:3px solid #b8afa1"></div>
<div class="abs" style="left:171.8px;top:358.8px;border-top:2px solid transparent;border-bottom:2px solid transparent;border-left:3px solid #55524c"></div>
<div class="btn" style="left:7.5px;top:371.2px;width:26.5px;height:14.3px;padding-top:1.55px"><span style="display:inline-block;transform-origin:50% 50%;transform:scaleX(0.889)">FG</span></div>
<div class="white" style="left:35.9px;top:371.2px;width:49.7px;height:14.3px;border-radius:2px;border-color:#b9ad9a;text-align:center;padding-top:2.4px;font-size:7.6px">0</div>
<div class="gbtn" style="left:7.5px;top:388.8px;width:26.5px;height:14px;padding-top:1.4px"><span style="display:inline-block;transform-origin:50% 50%;transform:scaleX(0.949)">F1</span></div>
<div class="gbtn" style="left:36.3px;top:388.8px;width:26.5px;height:14px;padding-top:1.4px"><span style="display:inline-block;transform-origin:50% 50%;transform:scaleX(0.949)">F2</span></div>
<div class="gbtn" style="left:64.7px;top:388.8px;width:26.5px;height:14px;padding-top:1.4px"><span style="display:inline-block;transform-origin:50% 50%;transform:scaleX(0.949)">F0</span></div>
<div class="gbtn" style="left:7.5px;top:405.7px;width:26.5px;height:14px;padding-top:1.4px"><span style="display:inline-block;transform-origin:50% 50%;transform:scaleX(0.949)">F3</span></div>
<div class="gbtn" style="left:36.3px;top:405.7px;width:26.5px;height:14px;padding-top:1.4px"><span style="display:inline-block;transform-origin:50% 50%;transform:scaleX(0.949)">F4</span></div>
<div class="btn" style="left:64.7px;top:405.7px;width:26.5px;height:14px;padding-top:1.4px"><span style="display:inline-block;transform-origin:50% 50%;transform:scaleX(1.312)">&gt;&gt;</span></div>
<div class="btn" style="left:7.5px;top:422.6px;width:83.7px;height:14px;padding-top:1.4px"><span style="display:inline-block;transform-origin:50% 50%;transform:scaleX(1.011)">Stop</span></div>
<div class="abs" style="left:100.3px;top:371.5px;width:3px;height:65.5px;border-radius:1.5px;background:linear-gradient(90deg,#c9bda9,#ddd4c6);border:.5px solid #c2b6a2"></div>
<div class="abs" style="left:98.3px;top:422.8px;width:7.2px;height:14.2px;border-radius:3px;background:linear-gradient(90deg,#fdfcfb,#e6e0d7);border:1px solid #c9beae"></div>
<div class="abs" style="left:100.5px;top:429.5px;width:2.8px;height:.7px;background:#cfc6b8"></div>
<svg class="abs" style="left:0;top:0;will-change:transform" width="900" height="516" viewBox="0 0 900 516"><path d="M137.20 383.50L137.20 377.20" stroke="#111" stroke-width="1.9"/><path d="M139.75 379.53L139.98 377.35" stroke="#111" stroke-width="1.15"/><path d="M142.27 379.93L142.73 377.78" stroke="#111" stroke-width="1.15"/><path d="M144.74 380.59L145.42 378.50" stroke="#111" stroke-width="1.15"/><path d="M147.12 381.51L148.02 379.50" stroke="#111" stroke-width="1.15"/><path d="M147.35 386.22L150.50 380.76" stroke="#111" stroke-width="1.9"/><path d="M151.54 384.06L152.84 382.28" stroke="#111" stroke-width="1.15"/><path d="M153.53 385.67L155.00 384.03" stroke="#111" stroke-width="1.15"/><path d="M155.33 387.47L156.97 386.00" stroke="#111" stroke-width="1.15"/><path d="M156.94 389.46L158.72 388.16" stroke="#111" stroke-width="1.15"/><path d="M154.78 393.65L160.24 390.50" stroke="#111" stroke-width="1.9"/><path d="M159.49 393.88L161.50 392.98" stroke="#111" stroke-width="1.15"/><path d="M160.41 396.26L162.50 395.58" stroke="#111" stroke-width="1.15"/><path d="M161.07 398.73L163.22 398.27" stroke="#111" stroke-width="1.15"/><path d="M161.47 401.25L163.65 401.02" stroke="#111" stroke-width="1.15"/><path d="M157.50 403.80L163.80 403.80" stroke="#111" stroke-width="1.9"/><path d="M161.47 406.35L163.65 406.58" stroke="#111" stroke-width="1.15"/><path d="M161.07 408.87L163.22 409.33" stroke="#111" stroke-width="1.15"/><path d="M160.41 411.34L162.50 412.02" stroke="#111" stroke-width="1.15"/><path d="M159.49 413.72L161.50 414.62" stroke="#111" stroke-width="1.15"/><path d="M154.78 413.95L160.24 417.10" stroke="#111" stroke-width="1.9"/><path d="M156.94 418.14L158.72 419.44" stroke="#111" stroke-width="1.15"/><path d="M155.33 420.13L156.97 421.60" stroke="#111" stroke-width="1.15"/><path d="M153.53 421.93L155.00 423.57" stroke="#111" stroke-width="1.15"/><path d="M151.54 423.54L152.84 425.32" stroke="#111" stroke-width="1.15"/><path d="M147.35 421.38L150.50 426.84" stroke="#111" stroke-width="1.9"/><path d="M147.12 426.09L148.02 428.10" stroke="#111" stroke-width="1.15"/><path d="M144.74 427.01L145.42 429.10" stroke="#111" stroke-width="1.15"/><path d="M142.27 427.67L142.73 429.82" stroke="#111" stroke-width="1.15"/><path d="M139.75 428.07L139.98 430.25" stroke="#111" stroke-width="1.15"/><path d="M137.20 424.10L137.20 430.40" stroke="#111" stroke-width="1.9"/><path d="M134.65 428.07L134.42 430.25" stroke="#111" stroke-width="1.15"/><path d="M132.13 427.67L131.67 429.82" stroke="#111" stroke-width="1.15"/><path d="M129.66 427.01L128.98 429.10" stroke="#111" stroke-width="1.15"/><path d="M127.28 426.09L126.38 428.10" stroke="#111" stroke-width="1.15"/><path d="M127.05 421.38L123.90 426.84" stroke="#111" stroke-width="1.9"/><path d="M122.86 423.54L121.56 425.32" stroke="#111" stroke-width="1.15"/><path d="M120.87 421.93L119.40 423.57" stroke="#111" stroke-width="1.15"/><path d="M119.07 420.13L117.43 421.60" stroke="#111" stroke-width="1.15"/><path d="M117.46 418.14L115.68 419.44" stroke="#111" stroke-width="1.15"/><path d="M119.62 413.95L114.16 417.10" stroke="#111" stroke-width="1.9"/><path d="M114.91 413.72L112.90 414.62" stroke="#111" stroke-width="1.15"/><path d="M113.99 411.34L111.90 412.02" stroke="#111" stroke-width="1.15"/><path d="M113.33 408.87L111.18 409.33" stroke="#111" stroke-width="1.15"/><path d="M112.93 406.35L110.75 406.58" stroke="#111" stroke-width="1.15"/><path d="M116.90 403.80L110.60 403.80" stroke="#111" stroke-width="1.9"/><path d="M112.93 401.25L110.75 401.02" stroke="#111" stroke-width="1.15"/><path d="M113.33 398.73L111.18 398.27" stroke="#111" stroke-width="1.15"/><path d="M113.99 396.26L111.90 395.58" stroke="#111" stroke-width="1.15"/><path d="M114.91 393.88L112.90 392.98" stroke="#111" stroke-width="1.15"/><path d="M119.62 393.65L114.16 390.50" stroke="#111" stroke-width="1.9"/><path d="M117.46 389.46L115.68 388.16" stroke="#111" stroke-width="1.15"/><path d="M119.07 387.47L117.43 386.00" stroke="#111" stroke-width="1.15"/><path d="M120.87 385.67L119.40 384.03" stroke="#111" stroke-width="1.15"/><path d="M122.86 384.06L121.56 382.28" stroke="#111" stroke-width="1.15"/><path d="M127.05 386.22L123.90 380.76" stroke="#111" stroke-width="1.9"/><path d="M127.28 381.51L126.38 379.50" stroke="#111" stroke-width="1.15"/><path d="M129.66 380.59L128.98 378.50" stroke="#111" stroke-width="1.15"/><path d="M132.13 379.93L131.67 377.78" stroke="#111" stroke-width="1.15"/><path d="M134.65 379.53L134.42 377.35" stroke="#111" stroke-width="1.15"/><text x="126.6" y="398.9" font-size="9.6" fill="#111" font-family="Liberation Sans">R</text><text x="132.4" y="397.6" font-size="6.3" fill="#111" font-family="Liberation Sans" textLength="16.2" lengthAdjust="spacingAndGlyphs">ocrail</text><path d="M127 398.3h25.6" stroke="#222" stroke-width=".5"/><path d="M139.20 411.80L139.50 428.80" stroke="#999" stroke-width="1.200"/><path d="M138.20 404.30L114.20 390.50" stroke="#111" stroke-width="1.800"/><path d="M138.20 403.80L120.40 405.80" stroke="#111" stroke-width="2.4"/><path d="M137.20 403.30L137.20 429.80" stroke="#e01010" stroke-width="1.2"/></svg>
<div class="frame" style="left:194.5px;top:57.2px;width:705px;height:387.6px;background:#f1eee9"></div>
<div class="tab sel" style="left:194.5px;top:39px;width:68px;height:19.3px;padding:4.7px 0 0 4.0px"><span style="display:inline-block;transform-origin:0 50%;transform:scaleX(1.025)">Module Overview</span></div>
<div class="abs" style="left:196.9px;top:59.6px;width:691.7px;height:373.1px;background:#fff"></div>
<div class="abs" style="left:888.9px;top:69.5px;width:11.1px;height:356px;border-radius:5px 5px 5px 5px;background:linear-gradient(90deg,#d9cdb9,#e9e2d7 25%,#f1ede7 60%,#e9e2d8)"></div>
<div class="abs" style="left:888.9px;top:69.5px;width:11.1px;height:120px;border-radius:5.5px;background:linear-gradient(90deg,#d3c6b0,#f6f3ee 22%,#fbfaf8 45%,#e3dacd 90%,#d8cebf);"></div>
<div class="abs" style="left:892.8px;top:124.5px;width:3px;height:.7px;background:#c9bfb0;box-shadow:0 1.5px #c9bfb0,0 3px #c9bfb0"></div>
<div class="abs" style="left:892.9px;top:63.8px;border-left:1.8px solid transparent;border-right:1.8px solid transparent;border-bottom:2.6px solid #b9b0a2"></div>
<div class="abs" style="left:892.3px;top:427px;border-left:2px solid transparent;border-right:2px solid transparent;border-top:3px solid #55524c"></div>
<div class="abs" style="left:206px;top:433.2px;width:672px;height:10.6px;border-radius:5px;background:linear-gradient(#d9cdb9,#e9e2d7 25%,#f1ede7 60%,#ebe4da)"></div>
<div class="abs" style="left:206px;top:433.2px;width:315.5px;height:10.6px;border-radius:5.3px;background:linear-gradient(#d3c6b0,#f6f3ee 22%,#fbfaf8 45%,#e6ded2 88%,#d8cebf)"></div>
<div class="abs" style="left:362px;top:437px;width:.7px;height:3px;background:#c9bfb0;box-shadow:1.5px 0 #c9bfb0,3px 0 #c9bfb0"></div>
<div class="abs" style="left:199.6px;top:436.4px;border-top:2.3px solid transparent;border-bottom:2.3px solid transparent;border-right:3.2px solid #b8afa1"></div>
<div class="abs" style="left:882.5px;top:436px;border-top:2px solid transparent;border-bottom:2px solid transparent;border-left:3px solid #55524c"></div>
<div class="lbl" style="left:1px;top:447.5px"><span style="display:inline-block;transform-origin:0 50%;transform:scaleX(1.018)">Server</span></div>
<div class="lbl" style="left:368px;top:447.5px"><span style="display:inline-block;transform-origin:0 50%;transform:scaleX(1.038)">Controller</span></div>
<div class="white" style="left:0.5px;top:456.7px;width:364.5px;height:45.9px"></div>
<div class="white" style="left:367.6px;top:456.7px;width:533px;height:45.9px"></div>
<div class="sf" style="left:0;width:283.5px"><span style="display:inline-block;transform-origin:0 50%;transform:scaleX(1.080)">5 items</span></div>
<div class="sf" style="left:285px;width:285.5px"><span style="display:inline-block;transform-origin:0 50%;transform:scaleX(1.066)">localhost:62842</span></div>
<div class="sf" style="left:572px;width:284px"></div>
<div class="sf" style="left:857.5px;width:42.5px"></div>
<div class="abs" style="left:860px;top:505.5px;width:8.8px;height:9px;border-radius:2px;background:#fbb;border:1px solid #f39898"></div>
<div class="abs" style="left:869.5px;top:505.5px;width:8.8px;height:9px;border-radius:2px;background:#b5f5b5;border:1px solid #8ee58e"></div>
<div class="abs" style="left:879px;top:505.5px;width:8.8px;height:9px;border-radius:2px;background:#fbb;border:1px solid #f39898"></div>
<div class="abs" style="left:888.5px;top:505.5px;width:8.8px;height:9px;border-radius:2px;background:#fbb;border:1px solid #f39898"></div>
<svg class="abs" style="left:0;top:0;will-change:transform;font-family:'Liberation Sans',sans-serif" width="900" height="516" viewBox="0 0 900 516"><path d="M196.1 60.2V130.96M207.51 60.2V130.96M218.92 60.2V130.96M230.33 60.2V130.96M241.74 60.2V130.96M253.15 60.2V130.96M264.56 60.2V130.96M275.97 60.2V130.96M287.38 60.2V130.96M298.79 60.2V130.96M310.2 60.2V130.96M321.61 60.2V130.96M333.02 60.2V130.96M344.43 60.2V130.96M355.84 60.2V130.96M367.25 60.2V130.96M378.66 60.2V130.96M390.07 60.2V130.96M401.48 60.2V130.96M412.89 60.2V130.96M424.3 60.2V130.96M435.71 60.2V130.96M447.12 60.2V130.96M196.1 60.2H449.42M196.1 71.61H449.42M196.1 83.02H449.42M196.1 94.43H449.42M196.1 105.84H449.42M196.1 117.25H449.42M196.1 128.66H449.42" stroke="#d0d0d0" stroke-width=".62" fill="none"/><path d="M447.12 83.02V165.19M458.53 83.02V165.19M469.94 83.02V165.19M481.35 83.02V165.19M492.76 83.02V165.19M504.17 83.02V165.19M515.58 83.02V165.19M526.99 83.02V165.19M538.4 83.02V165.19M549.81 83.02V165.19M561.22 83.02V165.19M572.63 83.02V165.19M584.04 83.02V165.19M595.45 83.02V165.19M447.12 83.02H597.75M447.12 94.43H597.75M447.12 105.84H597.75M447.12 117.25H597.75M447.12 128.66H597.75M447.12 140.07H597.75M447.12 151.48H597.75M447.12 162.89H597.75" stroke="#d0d0d0" stroke-width=".62" fill="none"/><path d="M595.45 94.43V130.96M606.86 94.43V130.96M618.27 94.43V130.96M629.68 94.43V130.96M641.09 94.43V130.96M652.5 94.43V130.96M663.91 94.43V130.96M675.32 94.43V130.96M686.73 94.43V130.96M698.14 94.43V130.96M709.55 94.43V130.96M720.96 94.43V130.96M732.37 94.43V130.96M595.45 94.43H734.67M595.45 105.84H734.67M595.45 117.25H734.67M595.45 128.66H734.67" stroke="#d0d0d0" stroke-width=".62" fill="none"/><path d="M732.37 94.43V165.19M743.78 94.43V165.19M755.19 94.43V165.19M766.6 94.43V165.19M778.01 94.43V165.19M789.42 94.43V165.19M800.83 94.43V165.19M812.24 94.43V165.19M823.65 94.43V165.19M732.37 94.43H825.95M732.37 105.84H825.95M732.37 117.25H825.95M732.37 128.66H825.95M732.37 140.07H825.95M732.37 151.48H825.95M732.37 162.89H825.95" stroke="#d0d0d0" stroke-width=".62" fill="none"/><path d="M800.83 162.89V370.57M812.24 162.89V370.57M823.65 162.89V370.57M835.06 162.89V370.57M846.47 162.89V370.57M857.88 162.89V370.57M869.29 162.89V370.57M800.83 162.89H871.59M800.83 174.3H871.59M800.83 185.71H871.59M800.83 197.12H871.59M800.83 208.53H871.59M800.83 219.94H871.59M800.83 231.35H871.59M800.83 242.76H871.59M800.83 254.17H871.59M800.83 265.58H871.59M800.83 276.99H871.59M800.83 288.4H871.59M800.83 299.81H871.59M800.83 311.22H871.59M800.83 322.63H871.59M800.83 334.04H871.59M800.83 345.45H871.59M800.83 356.86H871.59M800.83 368.27H871.59" stroke="#d0d0d0" stroke-width=".62" fill="none"/><path d="M469.94 162.89V245.06M481.35 162.89V245.06M492.76 162.89V245.06M504.17 162.89V245.06M515.58 162.89V245.06M469.94 162.89H517.88M469.94 174.3H517.88M469.94 185.71H517.88M469.94 197.12H517.88M469.94 208.53H517.88M469.94 219.94H517.88M469.94 231.35H517.88M469.94 242.76H517.88" stroke="#d0d0d0" stroke-width=".62" fill="none"/><path d="M515.58 162.89V222.24M526.99 162.89V222.24M538.4 162.89V222.24M549.81 162.89V222.24M561.22 162.89V222.24M572.63 162.89V222.24M584.04 162.89V222.24M595.45 162.89V222.24M606.86 162.89V222.24M618.27 162.89V222.24M629.68 162.89V222.24M641.09 162.89V222.24M652.5 162.89V222.24M663.91 162.89V222.24M675.32 162.89V222.24M686.73 162.89V222.24M515.58 162.89H689.03M515.58 174.3H689.03M515.58 185.71H689.03M515.58 197.12H689.03M515.58 208.53H689.03M515.58 219.94H689.03" stroke="#d0d0d0" stroke-width=".62" fill="none"/><path d="M458.53 242.76V313.52M469.94 242.76V313.52M481.35 242.76V313.52M492.76 242.76V313.52M458.53 242.76H495.06M458.53 254.17H495.06M458.53 265.58H495.06M458.53 276.99H495.06M458.53 288.4H495.06M458.53 299.81H495.06M458.53 311.22H495.06" stroke="#d0d0d0" stroke-width=".62" fill="none"/><path d="M378.66 311.22V416.21M390.07 311.22V416.21M401.48 311.22V416.21M412.89 311.22V416.21M424.3 311.22V416.21M435.71 311.22V416.21M447.12 311.22V416.21M458.53 311.22V416.21M469.94 311.22V416.21M481.35 311.22V416.21M492.76 311.22V416.21M504.17 311.22V416.21M515.58 311.22V416.21M526.99 311.22V416.21M538.4 311.22V416.21M549.81 311.22V416.21M561.22 311.22V416.21M572.63 311.22V416.21M584.04 311.22V416.21M595.45 311.22V416.21M378.66 311.22H597.75M378.66 322.63H597.75M378.66 334.04H597.75M378.66 345.45H597.75M378.66 356.86H597.75M378.66 368.27H597.75M378.66 379.68H597.75M378.66 391.09H597.75M378.66 402.5H597.75M378.66 413.91H597.75" stroke="#d0d0d0" stroke-width=".62" fill="none"/><path d="M264.56 208.53V256.47M275.97 208.53V256.47M287.38 208.53V256.47M298.79 208.53V256.47M310.2 208.53V256.47M321.61 208.53V256.47M333.02 208.53V256.47M344.43 208.53V256.47M355.84 208.53V256.47M264.56 208.53H358.14M264.56 219.94H358.14M264.56 231.35H358.14M264.56 242.76H358.14M264.56 254.17H358.14" stroke="#d0d0d0" stroke-width=".62" fill="none"/><rect x="459.13" y="334.64" width="55.85" height="55.85" fill="#fff"/><rect x="265.16" y="209.13" width="55.85" height="22.22" fill="#fff"/><rect x="265.16" y="230.75" width="78.67" height="21.92" fill="#fff"/><rect x="265.16" y="230.75" width="71.46" height="10.27" fill="#fff"/><g><g transform="translate(196.3 77.04)"><rect x="3" y="-1.6" width="8.41" height="3.2" fill="#767676"/><rect x="3.2" y="-.65" width="4.56" height="1.3" fill="#d6d6d6"/><rect x="8.56" y="-1.35" width="1.94" height="2.7" fill="#0a0a0a"/><rect x="2.2" y="-3.6" width="1.8" height="7.2" rx=".6" fill="#0a0a0a"/></g><g transform="translate(207.69 77.04)"><rect x="0" y="-1.6" width="11.41" height="3.2" fill="#767676"/><rect x="0.23" y="-1.35" width="2.51" height="2.7" fill="#0a0a0a"/><rect x="8.44" y="-1.35" width="2.05" height="2.7" fill="#0a0a0a"/><circle cx="5.71" cy="0" r="1.75" fill="#00ee00" stroke="#0a7a0a" stroke-width=".5"/><text x="1.37" y="-2.3" font-size="3.6" fill="#000" font-weight="bold">sf1</text></g><g transform="translate(219.08 77.04)"><rect x="0" y="-1.6" width="11.41" height="3.2" fill="#767676"/><rect x="0.23" y="-1.35" width="2.51" height="2.7" fill="#0a0a0a"/><rect x="8.44" y="-1.35" width="2.05" height="2.7" fill="#0a0a0a"/><circle cx="5.71" cy="0" r="1.75" fill="#00ee00" stroke="#0a7a0a" stroke-width=".5"/><text x="1.37" y="-2.3" font-size="3.6" fill="#000" font-weight="bold">sf1a</text></g><g transform="translate(230.48 77.04)"><rect x="0" y="-1.6" width="11.41" height="3.2" fill="#767676"/><rect x="2.74" y="-.65" width="5.71" height="1.3" fill="#d6d6d6"/><rect x="0.23" y="-1.35" width="2.28" height="2.7" fill="#0a0a0a"/><rect x="8.56" y="-1.35" width="1.94" height="2.7" fill="#0a0a0a"/></g><g transform="translate(241.87 77.04)"><rect x="0" y="-1.6" width="11.41" height="3.2" fill="#767676"/><rect x="2.74" y="-.65" width="5.71" height="1.3" fill="#d6d6d6"/><rect x="0.23" y="-1.35" width="2.28" height="2.7" fill="#0a0a0a"/><rect x="8.56" y="-1.35" width="1.94" height="2.7" fill="#0a0a0a"/></g><rect x="254.06" y="73.09" width="44.12" height="8" fill="#fff" stroke="#7a7a7a" stroke-width="1"/><path d="M254.06 81.59V73.09H298.68" stroke="#0a0a0a" stroke-width="1.2" fill="none"/><text transform="translate(254.76 79.14)" font-size="5.75" fill="#464646" stroke="#464646" stroke-width=".1" textLength="10.2" lengthAdjust="spacingAndGlyphs">1b4</text><g transform="translate(298.83 77.04)"><rect x="0" y="-1.6" width="11.41" height="3.2" fill="#767676"/><rect x="2.74" y="-.65" width="5.71" height="1.3" fill="#d6d6d6"/><rect x="0.23" y="-1.35" width="2.28" height="2.7" fill="#0a0a0a"/><rect x="8.56" y="-1.35" width="1.94" height="2.7" fill="#0a0a0a"/><path d="M1.57 0L4.37 -2.6V2.6Z" fill="#10c010" stroke="#0a6a0a" stroke-width=".3"/><path d="M10.19 0L7.39 -2.6V2.6Z" fill="#10c010" stroke="#0a6a0a" stroke-width=".3"/><rect x="5.41" y="-2.4" width="1.1" height="4.8" fill="#0a0a0a"/></g><g transform="translate(310.22 77.04)"><rect x="0" y="-1.6" width="11.41" height="3.2" fill="#767676"/><rect x="0.23" y="-1.35" width="2.51" height="2.7" fill="#0a0a0a"/><rect x="8.44" y="-1.35" width="2.05" height="2.7" fill="#0a0a0a"/><circle cx="5.71" cy="0" r="1.75" fill="#00ee00" stroke="#0a7a0a" stroke-width=".5"/><text x="1.37" y="-2.3" font-size="3.6" fill="#000" font-weight="bold">sf5</text></g><g transform="translate(321.61 77.04)"><rect x="0" y="-1.6" width="11.41" height="3.2" fill="#767676"/><rect x="2.74" y="-.65" width="5.71" height="1.3" fill="#d6d6d6"/><rect x="0.23" y="-1.35" width="2.28" height="2.7" fill="#0a0a0a"/><rect x="8.56" y="-1.35" width="1.94" height="2.7" fill="#0a0a0a"/><rect x="3.81" y="1.75" width="7" height="3.5" rx="1.6" fill="#000"/><circle cx="5.01" cy="3.5" r=".95" fill="#7a7410"/><circle cx="7.26" cy="3.5" r=".95" fill="#a01010"/><circle cx="9.51" cy="3.5" r=".95" fill="#00e800"/><path d="M3.81 3.5H1.2M1.2 2V5" stroke="#0a0a0a" stroke-width=".7" fill="none"/><text x="2.05" y="-2.3" font-size="3.6" fill="#000" font-weight="bold">1s5</text></g><g transform="translate(333 77.04)"><rect x="0" y="-1.6" width="11.41" height="3.2" fill="#767676"/><rect x="0.23" y="-1.35" width="10.95" height="2.7" fill="#0a0a0a"/><rect x="2.74" y="-.65" width="5.71" height="1.3" fill="#d6d6d6"/><text x="1.37" y="-2.3" font-size="3.6" fill="#000" font-weight="bold">1s8</text></g><g transform="translate(344.4 77.04)"><rect x="0" y="-1.6" width="11.41" height="3.2" fill="#767676"/><rect x="2.74" y="-.65" width="5.71" height="1.3" fill="#d6d6d6"/><rect x="0.23" y="-1.35" width="2.28" height="2.7" fill="#0a0a0a"/><rect x="8.56" y="-1.35" width="1.94" height="2.7" fill="#0a0a0a"/><rect x="0.3" y="-5.25" width="4.8" height="3.5" rx="1.6" fill="#000"/><circle cx="1.7" cy="-3.5" r=".95" fill="#401010"/><circle cx="3.95" cy="-3.5" r=".95" fill="#b81818"/><path d="M5.1 -3.5H10.2M10.2 -5V-2" stroke="#0a0a0a" stroke-width=".7" fill="none"/><text x="2.05" y="5" font-size="3.6" fill="#000" font-weight="bold">1s3</text></g><g transform="translate(355.79 77.04)"><rect x="0" y="-1.6" width="11.41" height="3.2" fill="#767676"/><rect x="0.23" y="-1.35" width="2.51" height="2.7" fill="#0a0a0a"/><rect x="8.44" y="-1.35" width="2.05" height="2.7" fill="#0a0a0a"/><circle cx="5.71" cy="0" r="1.75" fill="#00ee00" stroke="#0a7a0a" stroke-width=".5"/><text x="1.37" y="-2.3" font-size="3.6" fill="#000" font-weight="bold">sf6</text></g><rect x="367.98" y="73.09" width="44.12" height="8" fill="#c6c6c6" stroke="#585858" stroke-width=".9"/><text transform="translate(368.68 79.14)" font-size="5.75" fill="#464646" stroke="#464646" stroke-width=".1" textLength="33.54" lengthAdjust="spacingAndGlyphs">1b5 CLOSED</text><g transform="translate(412.75 77.04)"><rect x="0" y="-1.6" width="11.41" height="3.2" fill="#767676"/><rect x="0.23" y="-1.35" width="2.51" height="2.7" fill="#0a0a0a"/><rect x="8.44" y="-1.35" width="2.05" height="2.7" fill="#0a0a0a"/><circle cx="5.71" cy="0" r="1.75" fill="#00ee00" stroke="#0a7a0a" stroke-width=".5"/><text x="1.37" y="-2.3" font-size="3.6" fill="#000" font-weight="bold">sf6a</text></g><g transform="translate(424.14 77.04)"><rect x="0" y="-1.6" width="11.41" height="3.2" fill="#767676"/><rect x="0.23" y="-1.35" width="2.51" height="2.7" fill="#0a0a0a"/><rect x="8.44" y="-1.35" width="2.05" height="2.7" fill="#0a0a0a"/><circle cx="5.71" cy="0" r="1.75" fill="#00ee00" stroke="#0a7a0a" stroke-width=".5"/><text x="1.37" y="-2.3" font-size="3.6" fill="#000" font-weight="bold">sf6b</text></g><g transform="translate(435.53 77.04)"><rect x="0" y="-1.6" width="9.01" height="3.2" fill="#767676"/><rect x="3.42" y="-.65" width="4.79" height="1.3" fill="#d6d6d6"/><rect x="0.23" y="-1.35" width="2.28" height="2.7" fill="#0a0a0a"/><rect x="7.81" y="-3.6" width="1.8" height="7.2" rx=".6" fill="#0a0a0a"/></g><g transform="translate(196.3 99.82)"><rect x="3" y="-1.6" width="8.41" height="3.2" fill="#767676"/><rect x="3.2" y="-.65" width="4.56" height="1.3" fill="#d6d6d6"/><rect x="8.56" y="-1.35" width="1.94" height="2.7" fill="#0a0a0a"/><rect x="2.2" y="-3.6" width="1.8" height="7.2" rx=".6" fill="#0a0a0a"/></g><g transform="translate(207.69 99.82)"><rect x="0" y="-1.6" width="11.41" height="3.2" fill="#767676"/><rect x="0.23" y="-1.35" width="2.51" height="2.7" fill="#0a0a0a"/><rect x="8.44" y="-1.35" width="2.05" height="2.7" fill="#0a0a0a"/><circle cx="5.71" cy="0" r="1.75" fill="#00ee00" stroke="#0a7a0a" stroke-width=".5"/><text x="1.37" y="-2.3" font-size="3.6" fill="#000" font-weight="bold">sf3a</text></g><g transform="translate(219.08 99.82)"><rect x="0" y="-1.6" width="11.41" height="3.2" fill="#767676"/><rect x="2.74" y="-.65" width="5.71" height="1.3" fill="#d6d6d6"/><rect x="0.23" y="-1.35" width="2.28" height="2.7" fill="#0a0a0a"/><rect x="8.56" y="-1.35" width="1.94" height="2.7" fill="#0a0a0a"/></g><g transform="translate(230.48 99.82)"><rect x="0" y="-1.6" width="11.41" height="3.2" fill="#767676"/><rect x="2.74" y="-.65" width="5.71" height="1.3" fill="#d6d6d6"/><rect x="0.23" y="-1.35" width="2.28" height="2.7" fill="#0a0a0a"/><rect x="8.56" y="-1.35" width="1.94" height="2.7" fill="#0a0a0a"/></g><g transform="translate(241.87 99.82)"><rect x="0" y="-1.6" width="11.41" height="3.2" fill="#767676"/><rect x="2.74" y="-.65" width="5.71" height="1.3" fill="#d6d6d6"/><rect x="0.23" y="-1.35" width="2.28" height="2.7" fill="#0a0a0a"/><rect x="8.56" y="-1.35" width="1.94" height="2.7" fill="#0a0a0a"/><rect x="0.3" y="-5.25" width="7.8" height="3.5" rx="1.6" fill="#000"/><circle cx="1.7" cy="-3.5" r=".95" fill="#00e800"/><circle cx="3.95" cy="-3.5" r=".95" fill="#8a1010"/><circle cx="6.2" cy="-3.5" r=".95" fill="#7a7410"/><path d="M8.1 -3.5H10.2M10.2 -5V-2" stroke="#0a0a0a" stroke-width=".7" fill="none"/><text x="2.05" y="5" font-size="3.6" fill="#000" font-weight="bold">1s6</text></g><g transform="translate(253.26 99.82)"><rect x="0" y="-1.6" width="11.41" height="3.2" fill="#767676"/><rect x="0.23" y="-1.35" width="2.51" height="2.7" fill="#0a0a0a"/><rect x="8.44" y="-1.35" width="2.05" height="2.7" fill="#0a0a0a"/><circle cx="5.71" cy="0" r="1.75" fill="#00ee00" stroke="#0a7a0a" stroke-width=".5"/><text x="1.37" y="-2.3" font-size="3.6" fill="#000" font-weight="bold">sf3</text></g><rect x="265.45" y="95.88" width="44.12" height="8" fill="#fff" stroke="#7a7a7a" stroke-width="1"/><path d="M265.45 104.38V95.88H310.07" stroke="#0a0a0a" stroke-width="1.2" fill="none"/><text transform="translate(266.15 101.93)" font-size="5.75" fill="#464646" stroke="#464646" stroke-width=".1" textLength="10.2" lengthAdjust="spacingAndGlyphs">1b3</text><g transform="translate(310.22 99.82)"><rect x="0" y="-1.6" width="11.41" height="3.2" fill="#767676"/><rect x="2.74" y="-.65" width="5.71" height="1.3" fill="#d6d6d6"/><rect x="0.23" y="-1.35" width="2.28" height="2.7" fill="#0a0a0a"/><rect x="8.56" y="-1.35" width="1.94" height="2.7" fill="#0a0a0a"/><path d="M1.57 0L4.37 -2.6V2.6Z" fill="#10c010" stroke="#0a6a0a" stroke-width=".3"/><path d="M10.19 0L7.39 -2.6V2.6Z" fill="#10c010" stroke="#0a6a0a" stroke-width=".3"/><rect x="5.41" y="-2.4" width="1.1" height="4.8" fill="#0a0a0a"/></g><g transform="translate(321.61 99.82)"><rect x="0" y="-1.6" width="11.41" height="3.2" fill="#767676"/><rect x="0.23" y="-1.35" width="2.51" height="2.7" fill="#0a0a0a"/><rect x="8.44" y="-1.35" width="2.05" height="2.7" fill="#0a0a0a"/><circle cx="5.71" cy="0" r="1.75" fill="#00ee00" stroke="#0a7a0a" stroke-width=".5"/><text x="1.37" y="-2.3" font-size="3.6" fill="#000" font-weight="bold">sf8</text></g><g transform="translate(333 99.82)"><rect x="0" y="-1.6" width="11.41" height="3.2" fill="#767676"/><rect x="2.74" y="-.65" width="5.71" height="1.3" fill="#d6d6d6"/><rect x="0.23" y="-1.35" width="2.28" height="2.7" fill="#0a0a0a"/><rect x="8.56" y="-1.35" width="1.94" height="2.7" fill="#0a0a0a"/><rect x="3.81" y="1.75" width="7" height="3.5" rx="1.6" fill="#000"/><circle cx="5.01" cy="3.5" r=".95" fill="#7a7410"/><circle cx="7.26" cy="3.5" r=".95" fill="#a01010"/><circle cx="9.51" cy="3.5" r=".95" fill="#00e800"/><path d="M3.81 3.5H1.2M1.2 2V5" stroke="#0a0a0a" stroke-width=".7" fill="none"/><text x="2.05" y="-2.3" font-size="3.6" fill="#000" font-weight="bold">1s7</text></g><g transform="translate(344.4 99.82)"><rect x="0" y="-1.6" width="11.41" height="3.2" fill="#767676"/><rect x="0.23" y="-1.35" width="10.95" height="2.7" fill="#0a0a0a"/><rect x="2.74" y="-.8" width="6.28" height="1.6" fill="#f4e800"/></g><g transform="translate(355.79 99.82)"><rect x="0" y="-1.6" width="11.41" height="3.2" fill="#767676"/><rect x="0.23" y="-1.35" width="10.95" height="2.7" fill="#0a0a0a"/><rect x="2.74" y="-.8" width="6.28" height="1.6" fill="#f4e800"/></g><g transform="translate(367.18 99.82)"><rect x="0" y="-1.6" width="11.41" height="3.2" fill="#767676"/><rect x="2.74" y="-.65" width="5.71" height="1.3" fill="#d6d6d6"/><rect x="0.23" y="-1.35" width="2.28" height="2.7" fill="#0a0a0a"/><rect x="8.56" y="-1.35" width="1.94" height="2.7" fill="#0a0a0a"/><rect x="0.3" y="-5.25" width="4.8" height="3.5" rx="1.6" fill="#000"/><circle cx="1.7" cy="-3.5" r=".95" fill="#401010"/><circle cx="3.95" cy="-3.5" r=".95" fill="#b81818"/><path d="M5.1 -3.5H10.2M10.2 -5V-2" stroke="#0a0a0a" stroke-width=".7" fill="none"/><text x="2.05" y="5" font-size="3.6" fill="#000" font-weight="bold">1s4</text></g><g transform="translate(378.57 99.82)"><rect x="0" y="-1.6" width="11.41" height="3.2" fill="#767676"/><rect x="0.23" y="-1.35" width="2.51" height="2.7" fill="#0a0a0a"/><rect x="8.44" y="-1.35" width="2.05" height="2.7" fill="#0a0a0a"/><circle cx="5.71" cy="0" r="1.75" fill="#00ee00" stroke="#0a7a0a" stroke-width=".5"/><text x="1.37" y="-2.3" font-size="3.6" fill="#000" font-weight="bold">sf9a</text></g><rect x="390.76" y="95.88" width="44.12" height="8" fill="#fff" stroke="#7a7a7a" stroke-width="1"/><path d="M390.76 104.38V95.88H435.38" stroke="#0a0a0a" stroke-width="1.2" fill="none"/><text transform="translate(391.46 101.93)" font-size="5.75" fill="#464646" stroke="#464646" stroke-width=".1" textLength="10.2" lengthAdjust="spacingAndGlyphs">1b6</text><g transform="translate(435.53 99.82)"><rect x="0" y="-1.6" width="9.01" height="3.2" fill="#767676"/><rect x="3.42" y="-.65" width="4.79" height="1.3" fill="#d6d6d6"/><rect x="0.23" y="-1.35" width="2.28" height="2.7" fill="#0a0a0a"/><rect x="7.81" y="-3.6" width="1.8" height="7.2" rx=".6" fill="#0a0a0a"/></g><g transform="translate(196.3 111.21)"><rect x="3.2" y="-1.6" width="8.21" height="3.2" fill="#767676"/><rect x="4.2" y="-.65" width="4.11" height="1.3" fill="#dcdcdc"/><rect x="8.56" y="-1.35" width="1.94" height="2.7" fill="#0a0a0a"/><path d="M1.3 4.8C2.2 3.4 2.9 -2.6 3.9 -4.3C4.2 -4.8 4.7 -4.9 5.1 -4.7" stroke="#8a8a8a" stroke-width="1.55" fill="none"/></g><g transform="translate(207.69 111.21)"><rect x="0" y="-1.6" width="11.41" height="3.2" fill="#767676"/><rect x="0.23" y="-1.35" width="2.51" height="2.7" fill="#0a0a0a"/><rect x="8.44" y="-1.35" width="2.05" height="2.7" fill="#0a0a0a"/><circle cx="5.71" cy="0" r="1.75" fill="#00ee00" stroke="#0a7a0a" stroke-width=".5"/><text x="1.37" y="-2.3" font-size="3.6" fill="#000" font-weight="bold">sf22</text></g><g transform="translate(219.08 111.21)"><rect x="0" y="-1.6" width="11.41" height="3.2" fill="#767676"/><rect x="2.74" y="-.65" width="5.71" height="1.3" fill="#d6d6d6"/><rect x="0.23" y="-1.35" width="2.28" height="2.7" fill="#0a0a0a"/><rect x="8.56" y="-1.35" width="1.94" height="2.7" fill="#0a0a0a"/></g><g transform="translate(230.48 111.21)"><rect x="0" y="-1.6" width="11.41" height="3.2" fill="#767676"/><rect x="0.23" y="-1.35" width="10.95" height="2.7" fill="#0a0a0a"/><rect x="2.74" y="-.8" width="6.28" height="1.6" fill="#f4e800"/><text x="1.37" y="-2.3" font-size="3.6" fill="#000" font-weight="bold">1s1</text></g><g transform="translate(241.87 111.21)"><rect x="0" y="-1.6" width="11.41" height="3.2" fill="#767676"/><rect x="2.74" y="-.65" width="5.71" height="1.3" fill="#d6d6d6"/><rect x="0.23" y="-1.35" width="2.28" height="2.7" fill="#0a0a0a"/><rect x="8.56" y="-1.35" width="1.94" height="2.7" fill="#0a0a0a"/><rect x="0.3" y="-5.25" width="7.8" height="3.5" rx="1.6" fill="#000"/><circle cx="1.7" cy="-3.5" r=".95" fill="#00e800"/><circle cx="3.95" cy="-3.5" r=".95" fill="#8a1010"/><circle cx="6.2" cy="-3.5" r=".95" fill="#7a7410"/><path d="M8.1 -3.5H10.2M10.2 -5V-2" stroke="#0a0a0a" stroke-width=".7" fill="none"/><text x="2.05" y="5" font-size="3.6" fill="#000" font-weight="bold">1s5</text></g><g transform="translate(253.26 111.21)"><rect x="0" y="-1.6" width="11.41" height="3.2" fill="#767676"/><rect x="0.23" y="-1.35" width="2.51" height="2.7" fill="#0a0a0a"/><rect x="8.44" y="-1.35" width="2.05" height="2.7" fill="#0a0a0a"/><circle cx="5.71" cy="0" r="1.75" fill="#00ee00" stroke="#0a7a0a" stroke-width=".5"/><text x="1.37" y="-2.3" font-size="3.6" fill="#000" font-weight="bold">sf2</text></g><rect x="265.45" y="107.27" width="44.12" height="8" fill="#fff" stroke="#7a7a7a" stroke-width="1"/><path d="M265.45 115.77V107.27H310.07" stroke="#0a0a0a" stroke-width="1.2" fill="none"/><text transform="translate(266.15 113.32)" font-size="5.75" fill="#464646" stroke="#464646" stroke-width=".1" textLength="10.2" lengthAdjust="spacingAndGlyphs">1b2</text><g transform="translate(310.22 111.21)"><rect x="0" y="-1.6" width="11.41" height="3.2" fill="#767676"/><rect x="2.74" y="-.65" width="5.71" height="1.3" fill="#d6d6d6"/><rect x="0.23" y="-1.35" width="2.28" height="2.7" fill="#0a0a0a"/><rect x="8.56" y="-1.35" width="1.94" height="2.7" fill="#0a0a0a"/></g><g transform="translate(321.61 111.21)"><rect x="0" y="-1.6" width="11.41" height="3.2" fill="#767676"/><rect x="2.74" y="-.65" width="5.71" height="1.3" fill="#d6d6d6"/><rect x="0.23" y="-1.35" width="2.28" height="2.7" fill="#0a0a0a"/><rect x="8.56" y="-1.35" width="1.94" height="2.7" fill="#0a0a0a"/><path d="M2.59 0L5.39 -2.6V2.6Z" fill="#10c010" stroke="#0a6a0a" stroke-width=".3"/></g><g transform="translate(333 111.21)"><rect x="0" y="-1.6" width="11.41" height="3.2" fill="#767676"/><rect x="0.23" y="-1.35" width="2.51" height="2.7" fill="#0a0a0a"/><rect x="8.44" y="-1.35" width="2.05" height="2.7" fill="#0a0a0a"/><circle cx="5.71" cy="0" r="1.75" fill="#00ee00" stroke="#0a7a0a" stroke-width=".5"/><text x="1.37" y="-2.3" font-size="3.6" fill="#000" font-weight="bold">sf4</text></g><g transform="translate(344.4 111.21)"><rect x="0" y="-1.6" width="11.41" height="3.2" fill="#767676"/><rect x="2.74" y="-.65" width="5.71" height="1.3" fill="#d6d6d6"/><rect x="0.23" y="-1.35" width="2.28" height="2.7" fill="#0a0a0a"/><rect x="8.56" y="-1.35" width="1.94" height="2.7" fill="#0a0a0a"/><rect x="0.3" y="-5.25" width="7.8" height="3.5" rx="1.6" fill="#000"/><circle cx="1.7" cy="-3.5" r=".95" fill="#00e800"/><circle cx="3.95" cy="-3.5" r=".95" fill="#8a1010"/><circle cx="6.2" cy="-3.5" r=".95" fill="#7a7410"/><path d="M8.1 -3.5H10.2M10.2 -5V-2" stroke="#0a0a0a" stroke-width=".7" fill="none"/><text x="2.05" y="5" font-size="3.6" fill="#000" font-weight="bold">1s9</text></g><g transform="translate(355.79 111.21)"><rect x="0" y="-1.6" width="11.41" height="3.2" fill="#767676"/><rect x="0.23" y="-1.35" width="10.95" height="2.7" fill="#0a0a0a"/><rect x="2.74" y="-.8" width="6.28" height="1.6" fill="#f4e800"/></g><g transform="translate(367.18 111.21)"><rect x="0" y="-1.6" width="11.41" height="3.2" fill="#767676"/><rect x="0.23" y="-1.35" width="10.95" height="2.7" fill="#0a0a0a"/><rect x="2.74" y="-.8" width="6.28" height="1.6" fill="#f4e800"/></g><g transform="translate(378.57 111.21)"><rect x="0" y="-1.6" width="11.41" height="3.2" fill="#767676"/><rect x="2.74" y="-.65" width="5.71" height="1.3" fill="#d6d6d6"/><rect x="0.23" y="-1.35" width="2.28" height="2.7" fill="#0a0a0a"/><rect x="8.56" y="-1.35" width="1.94" height="2.7" fill="#0a0a0a"/></g><g transform="translate(389.96 111.21)"><rect x="0" y="-1.6" width="11.41" height="3.2" fill="#767676"/><rect x="2.74" y="-.65" width="5.71" height="1.3" fill="#d6d6d6"/><rect x="0.23" y="-1.35" width="2.28" height="2.7" fill="#0a0a0a"/><rect x="8.56" y="-1.35" width="1.94" height="2.7" fill="#0a0a0a"/></g><g transform="translate(401.36 111.21)"><rect x="0" y="-1.6" width="11.41" height="3.2" fill="#767676"/><rect x="2.74" y="-.65" width="5.71" height="1.3" fill="#d6d6d6"/><rect x="0.23" y="-1.35" width="2.28" height="2.7" fill="#0a0a0a"/><rect x="8.56" y="-1.35" width="1.94" height="2.7" fill="#0a0a0a"/></g><g transform="translate(412.75 111.21)"><rect x="0" y="-1.6" width="11.41" height="3.2" fill="#767676"/><rect x="2.74" y="-.65" width="5.71" height="1.3" fill="#d6d6d6"/><rect x="0.23" y="-1.35" width="2.28" height="2.7" fill="#0a0a0a"/><rect x="8.56" y="-1.35" width="1.94" height="2.7" fill="#0a0a0a"/></g><g transform="translate(424.14 111.21)"><rect x="0" y="-1.6" width="11.41" height="3.2" fill="#767676"/><rect x="2.74" y="-.65" width="5.71" height="1.3" fill="#d6d6d6"/><rect x="0.23" y="-1.35" width="2.28" height="2.7" fill="#0a0a0a"/><rect x="8.56" y="-1.35" width="1.94" height="2.7" fill="#0a0a0a"/></g><g transform="translate(435.53 111.21)"><rect x="0" y="-1.6" width="8.21" height="3.2" fill="#767676"/><rect x="3.42" y="-.65" width="4.11" height="1.3" fill="#dcdcdc"/><rect x="0.23" y="-1.35" width="2.28" height="2.7" fill="#0a0a0a"/><path d="M6.31 4.7C6.71 4.9 7.21 4.8 7.51 4.3C8.51 2.6 9.21 -3.4 10.11 -4.8" stroke="#8a8a8a" stroke-width="1.55" fill="none"/></g><g transform="translate(196.3 122.61)"><rect x="3.2" y="-1.6" width="8.21" height="3.2" fill="#767676"/><rect x="4.2" y="-.65" width="4.11" height="1.3" fill="#dcdcdc"/><rect x="8.56" y="-1.35" width="1.94" height="2.7" fill="#0a0a0a"/><path d="M1.3 4.8C2.2 3.4 2.9 -2.6 3.9 -4.3C4.2 -4.8 4.7 -4.9 5.1 -4.7" stroke="#8a8a8a" stroke-width="1.55" fill="none"/></g><g transform="translate(207.69 122.61)"><rect x="0" y="-1.6" width="11.41" height="3.2" fill="#767676"/><rect x="2.74" y="-.65" width="5.71" height="1.3" fill="#d6d6d6"/><rect x="0.23" y="-1.35" width="2.28" height="2.7" fill="#0a0a0a"/><rect x="8.56" y="-1.35" width="1.94" height="2.7" fill="#0a0a0a"/></g><g transform="translate(219.08 122.61)"><rect x="0" y="-1.6" width="11.41" height="3.2" fill="#767676"/><rect x="0.23" y="-1.35" width="10.95" height="2.7" fill="#0a0a0a"/><rect x="2.74" y="-.8" width="6.28" height="1.6" fill="#f4e800"/><text x="1.37" y="5" font-size="3.6" fill="#000" font-weight="bold">1s2</text></g><g transform="translate(230.48 122.61)"><rect x="0" y="-1.6" width="11.41" height="3.2" fill="#767676"/><rect x="2.74" y="-.65" width="5.71" height="1.3" fill="#d6d6d6"/><rect x="0.23" y="-1.35" width="2.28" height="2.7" fill="#0a0a0a"/><rect x="8.56" y="-1.35" width="1.94" height="2.7" fill="#0a0a0a"/><rect x="3.81" y="1.75" width="7" height="3.5" rx="1.6" fill="#000"/><circle cx="5.01" cy="3.5" r=".95" fill="#7a7410"/><circle cx="7.26" cy="3.5" r=".95" fill="#a01010"/><circle cx="9.51" cy="3.5" r=".95" fill="#00e800"/><path d="M3.81 3.5H1.2M1.2 2V5" stroke="#0a0a0a" stroke-width=".7" fill="none"/><text x="2.05" y="-2.3" font-size="3.6" fill="#000" font-weight="bold">1s10</text></g><g transform="translate(241.87 122.61)"><rect x="0" y="-1.6" width="11.41" height="3.2" fill="#767676"/><rect x="0.23" y="-1.35" width="2.51" height="2.7" fill="#0a0a0a"/><rect x="8.44" y="-1.35" width="2.05" height="2.7" fill="#0a0a0a"/><circle cx="5.71" cy="0" r="1.75" fill="#00ee00" stroke="#0a7a0a" stroke-width=".5"/><text x="1.37" y="-2.3" font-size="3.6" fill="#000" font-weight="bold">sf1</text></g><g transform="translate(253.26 122.61)"><rect x="0" y="-1.6" width="11.41" height="3.2" fill="#767676"/><rect x="2.74" y="-.65" width="5.71" height="1.3" fill="#d6d6d6"/><rect x="0.23" y="-1.35" width="2.28" height="2.7" fill="#0a0a0a"/><rect x="8.56" y="-1.35" width="1.94" height="2.7" fill="#0a0a0a"/></g><rect x="265.45" y="118.66" width="44.12" height="8" fill="#ffc9c9" stroke="#585858" stroke-width=".9"/><text transform="translate(266.15 124.71)" font-size="5.75" fill="#464646" stroke="#464646" stroke-width=".1" textLength="21.93" lengthAdjust="spacingAndGlyphs">1b1 TEE</text><g transform="translate(310.22 122.61)"><rect x="0" y="-1.6" width="11.41" height="3.2" fill="#767676"/><rect x="2.74" y="-.65" width="5.71" height="1.3" fill="#d6d6d6"/><rect x="0.23" y="-1.35" width="2.28" height="2.7" fill="#0a0a0a"/><rect x="8.56" y="-1.35" width="1.94" height="2.7" fill="#0a0a0a"/><path d="M8.82 0L6.02 -2.6V2.6Z" fill="#10c010" stroke="#0a6a0a" stroke-width=".3"/></g><g transform="translate(321.61 122.61)"><rect x="0" y="-1.6" width="11.41" height="3.2" fill="#767676"/><rect x="2.74" y="-.65" width="5.71" height="1.3" fill="#d6d6d6"/><rect x="0.23" y="-1.35" width="2.28" height="2.7" fill="#0a0a0a"/><rect x="8.56" y="-1.35" width="1.94" height="2.7" fill="#0a0a0a"/></g><g transform="translate(333 122.61)"><rect x="0" y="-1.6" width="11.41" height="3.2" fill="#767676"/><rect x="2.74" y="-.65" width="5.71" height="1.3" fill="#d6d6d6"/><rect x="0.23" y="-1.35" width="2.28" height="2.7" fill="#0a0a0a"/><rect x="8.56" y="-1.35" width="1.94" height="2.7" fill="#0a0a0a"/></g><g transform="translate(344.4 122.61)"><rect x="0" y="-1.6" width="11.41" height="3.2" fill="#767676"/><rect x="0.23" y="-1.35" width="2.51" height="2.7" fill="#0a0a0a"/><rect x="8.44" y="-1.35" width="2.05" height="2.7" fill="#0a0a0a"/><circle cx="5.71" cy="0" r="1.75" fill="#00ee00" stroke="#0a7a0a" stroke-width=".5"/><text x="1.37" y="-2.3" font-size="3.6" fill="#000" font-weight="bold">sf7</text></g><g transform="translate(355.79 122.61)"><rect x="0" y="-1.6" width="11.41" height="3.2" fill="#767676"/><rect x="2.74" y="-.65" width="5.71" height="1.3" fill="#d6d6d6"/><rect x="0.23" y="-1.35" width="2.28" height="2.7" fill="#0a0a0a"/><rect x="8.56" y="-1.35" width="1.94" height="2.7" fill="#0a0a0a"/><rect x="3.81" y="1.75" width="7" height="3.5" rx="1.6" fill="#000"/><circle cx="5.01" cy="3.5" r=".95" fill="#7a7410"/><circle cx="7.26" cy="3.5" r=".95" fill="#a01010"/><circle cx="9.51" cy="3.5" r=".95" fill="#00e800"/><path d="M3.81 3.5H1.2M1.2 2V5" stroke="#0a0a0a" stroke-width=".7" fill="none"/><text x="2.05" y="-2.3" font-size="3.6" fill="#000" font-weight="bold">1s11</text></g><g transform="translate(367.18 122.61)"><rect x="0" y="-1.6" width="11.41" height="3.2" fill="#767676"/><rect x="0.23" y="-1.35" width="10.95" height="2.7" fill="#0a0a0a"/><rect x="2.74" y="-.8" width="6.28" height="1.6" fill="#f4e800"/><text x="1.37" y="5" font-size="3.6" fill="#000" font-weight="bold">1s8</text></g><g transform="translate(378.57 122.61)"><rect x="0" y="-1.6" width="11.41" height="3.2" fill="#767676"/><rect x="2.74" y="-.65" width="5.71" height="1.3" fill="#d6d6d6"/><rect x="0.23" y="-1.35" width="2.28" height="2.7" fill="#0a0a0a"/><rect x="8.56" y="-1.35" width="1.94" height="2.7" fill="#0a0a0a"/></g><g transform="translate(389.96 122.61)"><rect x="0" y="-1.6" width="11.41" height="3.2" fill="#767676"/><rect x="2.74" y="-.65" width="5.71" height="1.3" fill="#d6d6d6"/><rect x="0.23" y="-1.35" width="2.28" height="2.7" fill="#0a0a0a"/><rect x="8.56" y="-1.35" width="1.94" height="2.7" fill="#0a0a0a"/></g><g transform="translate(401.36 122.61)"><rect x="0" y="-1.6" width="11.41" height="3.2" fill="#767676"/><rect x="2.74" y="-.65" width="5.71" height="1.3" fill="#d6d6d6"/><rect x="0.23" y="-1.35" width="2.28" height="2.7" fill="#0a0a0a"/><rect x="8.56" y="-1.35" width="1.94" height="2.7" fill="#0a0a0a"/></g><g transform="translate(412.75 122.61)"><rect x="0" y="-1.6" width="11.41" height="3.2" fill="#767676"/><rect x="2.74" y="-.65" width="5.71" height="1.3" fill="#d6d6d6"/><rect x="0.23" y="-1.35" width="2.28" height="2.7" fill="#0a0a0a"/><rect x="8.56" y="-1.35" width="1.94" height="2.7" fill="#0a0a0a"/></g><g transform="translate(424.14 122.61)"><rect x="0" y="-1.6" width="11.41" height="3.2" fill="#767676"/><rect x="2.74" y="-.65" width="5.71" height="1.3" fill="#d6d6d6"/><rect x="0.23" y="-1.35" width="2.28" height="2.7" fill="#0a0a0a"/><rect x="8.56" y="-1.35" width="1.94" height="2.7" fill="#0a0a0a"/></g><g transform="translate(435.53 122.61)"><rect x="0" y="-1.6" width="8.21" height="3.2" fill="#767676"/><rect x="3.42" y="-.65" width="4.11" height="1.3" fill="#dcdcdc"/><rect x="0.23" y="-1.35" width="2.28" height="2.7" fill="#0a0a0a"/><path d="M6.31 4.7C6.71 4.9 7.21 4.8 7.51 4.3C8.51 2.6 9.21 -3.4 10.11 -4.8" stroke="#8a8a8a" stroke-width="1.55" fill="none"/></g><path d="M334 78.04L378.57 122.61" stroke="#0a0a0a" stroke-width="3" fill="none"/><path d="M334 78.04L378.57 122.61" stroke="#e6e6e6" stroke-width="1.02" stroke-dasharray="2.6 1.5" stroke-dashoffset="-1.2" fill="none"/><path d="M334.2 78.24L336.8 80.84" stroke="#0a0a0a" stroke-width="2.8" fill="none"/><path d="M334.2 78.24L336.8 80.84" stroke="#f4e800" stroke-width="1.6" fill="none"/><path d="M235.18 112.81L226.79 121.01" stroke="#0a0a0a" stroke-width="2.4" fill="none"/><path d="M235.18 112.81L226.79 121.01" stroke="#e6e6e6" stroke-width="0.82" stroke-dasharray="2.6 1.5" stroke-dashoffset="-1.2" fill="none"/><g transform="translate(458.32 99.82)"><rect x="3" y="-1.6" width="8.41" height="3.2" fill="#767676"/><rect x="3.2" y="-.65" width="4.56" height="1.3" fill="#d6d6d6"/><rect x="8.56" y="-1.35" width="1.94" height="2.7" fill="#0a0a0a"/><rect x="2.2" y="-3.6" width="1.8" height="7.2" rx=".6" fill="#0a0a0a"/></g><g transform="translate(469.71 99.82)"><rect x="0" y="-1.6" width="11.41" height="3.2" fill="#767676"/><rect x="0.23" y="-1.35" width="2.51" height="2.7" fill="#0a0a0a"/><rect x="8.44" y="-1.35" width="2.05" height="2.7" fill="#0a0a0a"/><circle cx="5.71" cy="0" r="1.75" fill="#00ee00" stroke="#0a7a0a" stroke-width=".5"/><text x="1.37" y="-2.3" font-size="3.6" fill="#000" font-weight="bold">sf24</text></g><g transform="translate(481.1 99.82)"><rect x="0" y="-1.6" width="11.41" height="3.2" fill="#767676"/><rect x="0.23" y="-1.35" width="2.51" height="2.7" fill="#0a0a0a"/><rect x="8.44" y="-1.35" width="2.05" height="2.7" fill="#0a0a0a"/><circle cx="5.71" cy="0" r="1.75" fill="#00ee00" stroke="#0a7a0a" stroke-width=".5"/><text x="1.37" y="-2.3" font-size="3.6" fill="#000" font-weight="bold">sf21</text></g><g transform="translate(492.49 99.82)"><rect x="0" y="-1.6" width="11.41" height="3.2" fill="#767676"/><rect x="0.23" y="-1.35" width="10.95" height="2.7" fill="#0a0a0a"/><rect x="2.74" y="-.65" width="5.71" height="1.3" fill="#d6d6d6"/><text x="1.37" y="-2.3" font-size="3.6" fill="#000" font-weight="bold">2s2</text></g><g transform="translate(503.88 99.82)"><rect x="0" y="-1.6" width="11.41" height="3.2" fill="#767676"/><rect x="0.23" y="-1.35" width="2.51" height="2.7" fill="#0a0a0a"/><rect x="8.44" y="-1.35" width="2.05" height="2.7" fill="#0a0a0a"/><circle cx="5.71" cy="0" r="1.75" fill="#00ee00" stroke="#0a7a0a" stroke-width=".5"/><text x="1.37" y="-2.3" font-size="3.6" fill="#000" font-weight="bold">sf22</text></g><rect x="516.08" y="95.88" width="44.12" height="8" fill="#fff" stroke="#7a7a7a" stroke-width="1"/><path d="M516.08 104.38V95.88H560.69" stroke="#0a0a0a" stroke-width="1.2" fill="none"/><text transform="translate(516.78 101.93)" font-size="5.75" fill="#464646" stroke="#464646" stroke-width=".1" textLength="10.2" lengthAdjust="spacingAndGlyphs">2b3</text><g transform="translate(560.84 99.82)"><rect x="0" y="-1.6" width="11.41" height="3.2" fill="#767676"/><rect x="0.23" y="-1.35" width="2.51" height="2.7" fill="#0a0a0a"/><rect x="8.44" y="-1.35" width="2.05" height="2.7" fill="#0a0a0a"/><circle cx="5.71" cy="0" r="1.75" fill="#00ee00" stroke="#0a7a0a" stroke-width=".5"/><text x="1.37" y="-2.3" font-size="3.6" fill="#000" font-weight="bold">sf23</text></g><g transform="translate(572.24 99.82)"><rect x="0" y="-1.6" width="9.01" height="3.2" fill="#767676"/><rect x="3.42" y="-.65" width="4.79" height="1.3" fill="#d6d6d6"/><rect x="0.23" y="-1.35" width="2.28" height="2.7" fill="#0a0a0a"/><rect x="7.81" y="-3.6" width="1.8" height="7.2" rx=".6" fill="#0a0a0a"/></g><g transform="translate(446.92 111.21)"><rect x="3.2" y="-1.6" width="8.21" height="3.2" fill="#767676"/><rect x="4.2" y="-.65" width="4.11" height="1.3" fill="#dcdcdc"/><rect x="8.56" y="-1.35" width="1.94" height="2.7" fill="#0a0a0a"/><path d="M1.3 4.8C2.2 3.4 2.9 -2.6 3.9 -4.3C4.2 -4.8 4.7 -4.9 5.1 -4.7" stroke="#8a8a8a" stroke-width="1.55" fill="none"/></g><g transform="translate(458.32 111.21)"><rect x="0" y="-1.6" width="11.41" height="3.2" fill="#767676"/><rect x="2.74" y="-.65" width="5.71" height="1.3" fill="#d6d6d6"/><rect x="0.23" y="-1.35" width="2.28" height="2.7" fill="#0a0a0a"/><rect x="8.56" y="-1.35" width="1.94" height="2.7" fill="#0a0a0a"/><rect x="0.3" y="-5.25" width="7.8" height="3.5" rx="1.6" fill="#000"/><circle cx="1.7" cy="-3.5" r=".95" fill="#0a5a0a"/><circle cx="3.95" cy="-3.5" r=".95" fill="#f01010"/><circle cx="6.2" cy="-3.5" r=".95" fill="#7a7410"/><path d="M8.1 -3.5H10.2M10.2 -5V-2" stroke="#0a0a0a" stroke-width=".7" fill="none"/><text x="2.05" y="5" font-size="3.6" fill="#000" font-weight="bold">2s3</text></g><g transform="translate(469.71 111.21)"><rect x="0" y="-1.6" width="11.41" height="3.2" fill="#767676"/><rect x="0.23" y="-1.35" width="2.51" height="2.7" fill="#0a0a0a"/><rect x="8.44" y="-1.35" width="2.05" height="2.7" fill="#0a0a0a"/><circle cx="5.71" cy="0" r="1.75" fill="#00ee00" stroke="#0a7a0a" stroke-width=".5"/><text x="1.37" y="-2.3" font-size="3.6" fill="#000" font-weight="bold">sf5</text></g><g transform="translate(481.1 111.21)"><rect x="0" y="-1.6" width="11.41" height="3.2" fill="#767676"/><rect x="2.74" y="-.65" width="5.71" height="1.3" fill="#d6d6d6"/><rect x="0.23" y="-1.35" width="2.28" height="2.7" fill="#0a0a0a"/><rect x="8.56" y="-1.35" width="1.94" height="2.7" fill="#0a0a0a"/></g><g transform="translate(492.49 111.21)"><rect x="0" y="-1.6" width="11.41" height="3.2" fill="#767676"/><rect x="0.23" y="-1.35" width="10.95" height="2.7" fill="#0a0a0a"/><rect x="2.74" y="-.8" width="6.28" height="1.6" fill="#f4e800"/><text x="1.37" y="5" font-size="3.6" fill="#000" font-weight="bold">2s2</text></g><g transform="translate(503.88 111.21)"><rect x="0" y="-1.6" width="11.41" height="3.2" fill="#767676"/><rect x="0.23" y="-1.35" width="2.51" height="2.7" fill="#0a0a0a"/><rect x="8.44" y="-1.35" width="2.05" height="2.7" fill="#0a0a0a"/><circle cx="5.71" cy="0" r="1.75" fill="#00ee00" stroke="#0a7a0a" stroke-width=".5"/><text x="1.37" y="-2.3" font-size="3.6" fill="#000" font-weight="bold">sf5</text></g><rect x="516.08" y="107.27" width="44.12" height="8" fill="#ffc9c9" stroke="#585858" stroke-width=".9"/><text transform="translate(516.78 113.32)" font-size="5.75" fill="#464646" stroke="#464646" stroke-width=".1" textLength="33.96" lengthAdjust="spacingAndGlyphs">2b1 mP3020</text><g transform="translate(560.84 111.21)"><rect x="0" y="-1.6" width="11.41" height="3.2" fill="#767676"/><rect x="0.23" y="-1.35" width="2.51" height="2.7" fill="#0a0a0a"/><rect x="8.44" y="-1.35" width="2.05" height="2.7" fill="#0a0a0a"/><circle cx="5.71" cy="0" r="1.75" fill="#00ee00" stroke="#0a7a0a" stroke-width=".5"/><text x="1.37" y="-2.3" font-size="3.6" fill="#000" font-weight="bold">sf7</text></g><g transform="translate(572.24 111.21)"><rect x="0" y="-1.6" width="11.41" height="3.2" fill="#767676"/><rect x="0.23" y="-1.35" width="2.51" height="2.7" fill="#0a0a0a"/><rect x="8.44" y="-1.35" width="2.05" height="2.7" fill="#0a0a0a"/><circle cx="5.71" cy="0" r="1.75" fill="#00ee00" stroke="#0a7a0a" stroke-width=".5"/><text x="1.37" y="-2.3" font-size="3.6" fill="#000" font-weight="bold">sf8</text></g><g transform="translate(583.63 111.21)"><rect x="0" y="-1.6" width="8.21" height="3.2" fill="#767676"/><rect x="3.42" y="-.65" width="4.11" height="1.3" fill="#dcdcdc"/><rect x="0.23" y="-1.35" width="2.28" height="2.7" fill="#0a0a0a"/><path d="M6.31 4.7C6.71 4.9 7.21 4.8 7.51 4.3C8.51 2.6 9.21 -3.4 10.11 -4.8" stroke="#8a8a8a" stroke-width="1.55" fill="none"/></g><g transform="translate(446.92 122.61)"><rect x="3.2" y="-1.6" width="8.21" height="3.2" fill="#767676"/><rect x="4.2" y="-.65" width="4.11" height="1.3" fill="#dcdcdc"/><rect x="8.56" y="-1.35" width="1.94" height="2.7" fill="#0a0a0a"/><path d="M1.3 4.8C2.2 3.4 2.9 -2.6 3.9 -4.3C4.2 -4.8 4.7 -4.9 5.1 -4.7" stroke="#8a8a8a" stroke-width="1.55" fill="none"/></g><g transform="translate(458.32 122.61)"><rect x="0" y="-1.6" width="11.41" height="3.2" fill="#767676"/><rect x="0.23" y="-1.35" width="2.51" height="2.7" fill="#0a0a0a"/><rect x="8.44" y="-1.35" width="2.05" height="2.7" fill="#0a0a0a"/><circle cx="5.71" cy="0" r="1.75" fill="#00ee00" stroke="#0a7a0a" stroke-width=".5"/><text x="1.37" y="-2.3" font-size="3.6" fill="#000" font-weight="bold">sf6</text></g><g transform="translate(469.71 122.61)"><rect x="0" y="-1.6" width="11.41" height="3.2" fill="#767676"/><rect x="0.23" y="-1.35" width="10.95" height="2.7" fill="#0a0a0a"/><rect x="2.74" y="-.65" width="5.71" height="1.3" fill="#d6d6d6"/><text x="1.37" y="-2.3" font-size="3.6" fill="#000" font-weight="bold">2s1</text></g><g transform="translate(481.1 122.61)"><rect x="0" y="-1.6" width="11.41" height="3.2" fill="#767676"/><rect x="2.74" y="-.65" width="5.71" height="1.3" fill="#d6d6d6"/><rect x="0.23" y="-1.35" width="2.28" height="2.7" fill="#0a0a0a"/><rect x="8.56" y="-1.35" width="1.94" height="2.7" fill="#0a0a0a"/></g><g transform="translate(492.49 122.61)"><rect x="0" y="-1.6" width="11.41" height="3.2" fill="#767676"/><rect x="0.23" y="-1.35" width="2.51" height="2.7" fill="#0a0a0a"/><rect x="8.44" y="-1.35" width="2.05" height="2.7" fill="#0a0a0a"/><circle cx="5.71" cy="0" r="1.75" fill="#00ee00" stroke="#0a7a0a" stroke-width=".5"/><text x="1.37" y="-2.3" font-size="3.6" fill="#000" font-weight="bold">sf9</text></g><rect x="504.68" y="118.66" width="44.12" height="8" fill="#ffc9c9" stroke="#585858" stroke-width=".9"/><text transform="translate(505.38 124.71)" font-size="5.75" fill="#464646" stroke="#464646" stroke-width=".1" textLength="32.92" lengthAdjust="spacingAndGlyphs">2b2 NS2445</text><g transform="translate(549.45 122.61)"><rect x="0" y="-1.6" width="11.41" height="3.2" fill="#767676"/><rect x="0.23" y="-1.35" width="2.51" height="2.7" fill="#0a0a0a"/><rect x="8.44" y="-1.35" width="2.05" height="2.7" fill="#0a0a0a"/><circle cx="5.71" cy="0" r="1.75" fill="#00ee00" stroke="#0a7a0a" stroke-width=".5"/><text x="1.37" y="-2.3" font-size="3.6" fill="#000" font-weight="bold">sf4</text></g><g transform="translate(560.84 122.61)"><rect x="0" y="-1.6" width="11.41" height="3.2" fill="#767676"/><rect x="0.23" y="-1.35" width="2.51" height="2.7" fill="#0a0a0a"/><rect x="8.44" y="-1.35" width="2.05" height="2.7" fill="#0a0a0a"/><circle cx="5.71" cy="0" r="1.75" fill="#00ee00" stroke="#0a7a0a" stroke-width=".5"/><text x="1.37" y="-2.3" font-size="3.6" fill="#000" font-weight="bold">sf5</text></g><g transform="translate(572.24 122.61)"><rect x="0" y="-1.6" width="11.41" height="3.2" fill="#767676"/><rect x="2.74" y="-.65" width="5.71" height="1.3" fill="#d6d6d6"/><rect x="0.23" y="-1.35" width="2.28" height="2.7" fill="#0a0a0a"/><rect x="8.56" y="-1.35" width="1.94" height="2.7" fill="#0a0a0a"/><rect x="3.81" y="1.75" width="7" height="3.5" rx="1.6" fill="#000"/><circle cx="5.01" cy="3.5" r=".95" fill="#7a7410"/><circle cx="7.26" cy="3.5" r=".95" fill="#a01010"/><circle cx="9.51" cy="3.5" r=".95" fill="#00e800"/><path d="M3.81 3.5H1.2M1.2 2V5" stroke="#0a0a0a" stroke-width=".7" fill="none"/><text x="2.05" y="-2.3" font-size="3.6" fill="#000" font-weight="bold">2s1</text></g><g transform="translate(583.63 122.61)"><rect x="0" y="-1.6" width="8.21" height="3.2" fill="#767676"/><rect x="3.42" y="-.65" width="4.11" height="1.3" fill="#dcdcdc"/><rect x="0.23" y="-1.35" width="2.28" height="2.7" fill="#0a0a0a"/><path d="M6.31 4.7C6.71 4.9 7.21 4.8 7.51 4.3C8.51 2.6 9.21 -3.4 10.11 -4.8" stroke="#8a8a8a" stroke-width="1.55" fill="none"/></g><path d="M503.28 100.62L493.29 110.61" stroke="#0a0a0a" stroke-width="2.4" fill="none"/><path d="M503.28 100.62L493.29 110.61" stroke="#e6e6e6" stroke-width="0.82" stroke-dasharray="2.6 1.5" stroke-dashoffset="-1.2" fill="none"/><path d="M502.48 101.42L500.28 103.62" stroke="#0a0a0a" stroke-width="2.8" fill="none"/><path d="M502.48 101.42L500.28 103.62" stroke="#f4e800" stroke-width="1.6" fill="none"/><path d="M470.31 123.21L486.8 139.69" stroke="#0a0a0a" stroke-width="2.6" fill="none"/><path d="M470.31 123.21L486.8 139.69" stroke="#e6e6e6" stroke-width="0.88" stroke-dasharray="2.6 1.5" stroke-dashoffset="-1.2" fill="none"/><path d="M471.01 123.91L473.31 126.21" stroke="#0a0a0a" stroke-width="2.8" fill="none"/><path d="M471.01 123.91L473.31 126.21" stroke="#f4e800" stroke-width="1.6" fill="none"/><g transform="translate(486.8 151.09) rotate(-90)"><rect x="0" y="-1.6" width="11.41" height="3.2" fill="#767676"/><rect x="0.23" y="-1.35" width="2.51" height="2.7" fill="#0a0a0a"/><rect x="8.44" y="-1.35" width="2.05" height="2.7" fill="#0a0a0a"/><circle cx="5.71" cy="0" r="1.75" fill="#00ee00" stroke="#0a7a0a" stroke-width=".5"/><text x="1.37" y="-2.3" font-size="3.6" fill="#000" font-weight="bold">21</text></g><g transform="translate(486.8 162.48) rotate(-90)"><rect x="3.2" y="-1.6" width="8.21" height="3.2" fill="#767676"/><rect x="4.2" y="-.65" width="4.11" height="1.3" fill="#dcdcdc"/><rect x="8.56" y="-1.35" width="1.94" height="2.7" fill="#0a0a0a"/><path d="M1.3 4.8C2.2 3.4 2.9 -2.6 3.9 -4.3C4.2 -4.8 4.7 -4.9 5.1 -4.7" stroke="#8a8a8a" stroke-width="1.55" fill="none"/></g><g transform="translate(595.02 111.21)"><rect x="3.2" y="-1.6" width="8.21" height="3.2" fill="#767676"/><rect x="4.2" y="-.65" width="4.11" height="1.3" fill="#dcdcdc"/><rect x="8.56" y="-1.35" width="1.94" height="2.7" fill="#0a0a0a"/><path d="M1.3 4.8C2.2 3.4 2.9 -2.6 3.9 -4.3C4.2 -4.8 4.7 -4.9 5.1 -4.7" stroke="#8a8a8a" stroke-width="1.55" fill="none"/></g><g transform="translate(606.41 111.21)"><rect x="0" y="-1.6" width="11.41" height="3.2" fill="#767676"/><rect x="2.74" y="-.65" width="5.71" height="1.3" fill="#d6d6d6"/><rect x="0.23" y="-1.35" width="2.28" height="2.7" fill="#0a0a0a"/><rect x="8.56" y="-1.35" width="1.94" height="2.7" fill="#0a0a0a"/><rect x="0.3" y="-5.25" width="7.8" height="3.5" rx="1.6" fill="#000"/><circle cx="1.7" cy="-3.5" r=".95" fill="#00e800"/><circle cx="3.95" cy="-3.5" r=".95" fill="#8a1010"/><circle cx="6.2" cy="-3.5" r=".95" fill="#7a7410"/><path d="M8.1 -3.5H10.2M10.2 -5V-2" stroke="#0a0a0a" stroke-width=".7" fill="none"/><text x="2.05" y="5" font-size="3.6" fill="#000" font-weight="bold">3s1</text></g><g transform="translate(617.8 111.21)"><rect x="0" y="-1.6" width="11.41" height="3.2" fill="#767676"/><rect x="0.23" y="-1.35" width="2.51" height="2.7" fill="#0a0a0a"/><rect x="8.44" y="-1.35" width="2.05" height="2.7" fill="#0a0a0a"/><circle cx="5.71" cy="0" r="1.75" fill="#00ee00" stroke="#0a7a0a" stroke-width=".5"/><text x="1.37" y="-2.3" font-size="3.6" fill="#000" font-weight="bold">sf5</text></g><g transform="translate(629.2 111.21)"><rect x="0" y="-1.6" width="11.41" height="3.2" fill="#767676"/><rect x="0.23" y="-1.35" width="10.95" height="2.7" fill="#0a0a0a"/><rect x="2.74" y="-.8" width="6.28" height="1.6" fill="#f4e800"/><text x="1.37" y="-2.3" font-size="3.6" fill="#000" font-weight="bold">3s5</text></g><g transform="translate(640.59 111.21)"><rect x="0" y="-1.6" width="11.41" height="3.2" fill="#767676"/><rect x="0.23" y="-1.35" width="2.51" height="2.7" fill="#0a0a0a"/><rect x="8.44" y="-1.35" width="2.05" height="2.7" fill="#0a0a0a"/><circle cx="5.71" cy="0" r="1.75" fill="#00ee00" stroke="#0a7a0a" stroke-width=".5"/><text x="1.37" y="-2.3" font-size="3.6" fill="#000" font-weight="bold">sf6</text></g><rect x="652.78" y="107.27" width="44.12" height="8" fill="#fff" stroke="#7a7a7a" stroke-width="1"/><path d="M652.78 115.77V107.27H697.4" stroke="#0a0a0a" stroke-width="1.2" fill="none"/><text transform="translate(653.48 113.32)" font-size="5.75" fill="#464646" stroke="#464646" stroke-width=".1" textLength="10.2" lengthAdjust="spacingAndGlyphs">3b1</text><g transform="translate(697.55 111.21)"><rect x="0" y="-1.6" width="11.41" height="3.2" fill="#767676"/><rect x="0.23" y="-1.35" width="2.51" height="2.7" fill="#0a0a0a"/><rect x="8.44" y="-1.35" width="2.05" height="2.7" fill="#0a0a0a"/><circle cx="5.71" cy="0" r="1.75" fill="#00ee00" stroke="#0a7a0a" stroke-width=".5"/><text x="1.37" y="-2.3" font-size="3.6" fill="#000" font-weight="bold">sf7</text></g><g transform="translate(708.94 111.21)"><rect x="0" y="-1.6" width="11.41" height="3.2" fill="#767676"/><rect x="2.74" y="-.65" width="5.71" height="1.3" fill="#d6d6d6"/><rect x="0.23" y="-1.35" width="2.28" height="2.7" fill="#0a0a0a"/><rect x="8.56" y="-1.35" width="1.94" height="2.7" fill="#0a0a0a"/><path d="M2.59 0L5.39 -2.6V2.6Z" fill="#10c010" stroke="#0a6a0a" stroke-width=".3"/></g><g transform="translate(720.33 111.21)"><rect x="0" y="-1.6" width="8.21" height="3.2" fill="#767676"/><rect x="3.42" y="-.65" width="4.11" height="1.3" fill="#dcdcdc"/><rect x="0.23" y="-1.35" width="2.28" height="2.7" fill="#0a0a0a"/><path d="M6.31 4.7C6.71 4.9 7.21 4.8 7.51 4.3C8.51 2.6 9.21 -3.4 10.11 -4.8" stroke="#8a8a8a" stroke-width="1.55" fill="none"/></g><g transform="translate(595.02 122.61)"><rect x="3.2" y="-1.6" width="8.21" height="3.2" fill="#767676"/><rect x="4.2" y="-.65" width="4.11" height="1.3" fill="#dcdcdc"/><rect x="8.56" y="-1.35" width="1.94" height="2.7" fill="#0a0a0a"/><path d="M1.3 4.8C2.2 3.4 2.9 -2.6 3.9 -4.3C4.2 -4.8 4.7 -4.9 5.1 -4.7" stroke="#8a8a8a" stroke-width="1.55" fill="none"/></g><g transform="translate(606.41 122.61)"><rect x="0" y="-1.6" width="11.41" height="3.2" fill="#767676"/><rect x="0.23" y="-1.35" width="2.51" height="2.7" fill="#0a0a0a"/><rect x="8.44" y="-1.35" width="2.05" height="2.7" fill="#0a0a0a"/><circle cx="5.71" cy="0" r="1.75" fill="#00ee00" stroke="#0a7a0a" stroke-width=".5"/><text x="1.37" y="-2.3" font-size="3.6" fill="#000" font-weight="bold">sf4</text></g><g transform="translate(617.8 122.61)"><rect x="0" y="-1.6" width="11.41" height="3.2" fill="#767676"/><rect x="2.74" y="-.65" width="5.71" height="1.3" fill="#d6d6d6"/><rect x="0.23" y="-1.35" width="2.28" height="2.7" fill="#0a0a0a"/><rect x="8.56" y="-1.35" width="1.94" height="2.7" fill="#0a0a0a"/><path d="M8.82 0L6.02 -2.6V2.6Z" fill="#10c010" stroke="#0a6a0a" stroke-width=".3"/></g><g transform="translate(629.2 122.61)"><rect x="0" y="-1.6" width="11.41" height="3.2" fill="#767676"/><rect x="0.23" y="-1.35" width="10.95" height="2.7" fill="#0a0a0a"/><rect x="2.74" y="-.8" width="6.28" height="1.6" fill="#f4e800"/><text x="1.37" y="5" font-size="3.6" fill="#000" font-weight="bold">3s6</text></g><rect x="641.39" y="118.66" width="44.12" height="8" fill="#fff" stroke="#7a7a7a" stroke-width="1"/><path d="M641.39 127.16V118.66H686.01" stroke="#0a0a0a" stroke-width="1.2" fill="none"/><text transform="translate(642.09 124.71)" font-size="5.75" fill="#464646" stroke="#464646" stroke-width=".1" textLength="10.2" lengthAdjust="spacingAndGlyphs">3b2</text><g transform="translate(686.16 122.61)"><rect x="0" y="-1.6" width="11.41" height="3.2" fill="#767676"/><rect x="0.23" y="-1.35" width="2.51" height="2.7" fill="#0a0a0a"/><rect x="8.44" y="-1.35" width="2.05" height="2.7" fill="#0a0a0a"/><circle cx="5.71" cy="0" r="1.75" fill="#00ee00" stroke="#0a7a0a" stroke-width=".5"/><text x="1.37" y="-2.3" font-size="3.6" fill="#000" font-weight="bold">sf3</text></g><g transform="translate(697.55 122.61)"><rect x="0" y="-1.6" width="11.41" height="3.2" fill="#767676"/><rect x="0.23" y="-1.35" width="2.51" height="2.7" fill="#0a0a0a"/><rect x="8.44" y="-1.35" width="2.05" height="2.7" fill="#0a0a0a"/><circle cx="5.71" cy="0" r="1.75" fill="#00ee00" stroke="#0a7a0a" stroke-width=".5"/><text x="1.37" y="-2.3" font-size="3.6" fill="#000" font-weight="bold">sf5</text></g><g transform="translate(708.94 122.61)"><rect x="0" y="-1.6" width="11.41" height="3.2" fill="#767676"/><rect x="2.74" y="-.65" width="5.71" height="1.3" fill="#d6d6d6"/><rect x="0.23" y="-1.35" width="2.28" height="2.7" fill="#0a0a0a"/><rect x="8.56" y="-1.35" width="1.94" height="2.7" fill="#0a0a0a"/><rect x="3.81" y="1.75" width="7" height="3.5" rx="1.6" fill="#000"/><circle cx="5.01" cy="3.5" r=".95" fill="#7a7410"/><circle cx="7.26" cy="3.5" r=".95" fill="#a01010"/><circle cx="9.51" cy="3.5" r=".95" fill="#00e800"/><path d="M3.81 3.5H1.2M1.2 2V5" stroke="#0a0a0a" stroke-width=".7" fill="none"/><text x="2.05" y="-2.3" font-size="3.6" fill="#000" font-weight="bold">3s2</text></g><g transform="translate(720.33 122.61)"><rect x="0" y="-1.6" width="8.21" height="3.2" fill="#767676"/><rect x="3.42" y="-.65" width="4.11" height="1.3" fill="#dcdcdc"/><rect x="0.23" y="-1.35" width="2.28" height="2.7" fill="#0a0a0a"/><path d="M6.31 4.7C6.71 4.9 7.21 4.8 7.51 4.3C8.51 2.6 9.21 -3.4 10.11 -4.8" stroke="#8a8a8a" stroke-width="1.55" fill="none"/></g><path d="M639.99 112.01L630 122.01" stroke="#0a0a0a" stroke-width="2.4" fill="none"/><path d="M639.99 112.01L630 122.01" stroke="#e6e6e6" stroke-width="0.82" stroke-dasharray="2.6 1.5" stroke-dashoffset="-1.2" fill="none"/><g transform="translate(731.72 111.21)"><rect x="3.2" y="-1.6" width="8.21" height="3.2" fill="#767676"/><rect x="4.2" y="-.65" width="4.11" height="1.3" fill="#dcdcdc"/><rect x="8.56" y="-1.35" width="1.94" height="2.7" fill="#0a0a0a"/><path d="M1.3 4.8C2.2 3.4 2.9 -2.6 3.9 -4.3C4.2 -4.8 4.7 -4.9 5.1 -4.7" stroke="#8a8a8a" stroke-width="1.55" fill="none"/></g><g transform="translate(743.12 111.21)"><rect x="0" y="-1.6" width="11.41" height="3.2" fill="#767676"/><rect x="2.74" y="-.65" width="5.71" height="1.3" fill="#d6d6d6"/><rect x="0.23" y="-1.35" width="2.28" height="2.7" fill="#0a0a0a"/><rect x="8.56" y="-1.35" width="1.94" height="2.7" fill="#0a0a0a"/><rect x="0.3" y="-5.25" width="7.8" height="3.5" rx="1.6" fill="#000"/><circle cx="1.7" cy="-3.5" r=".95" fill="#00e800"/><circle cx="3.95" cy="-3.5" r=".95" fill="#8a1010"/><circle cx="6.2" cy="-3.5" r=".95" fill="#7a7410"/><path d="M8.1 -3.5H10.2M10.2 -5V-2" stroke="#0a0a0a" stroke-width=".7" fill="none"/><text x="2.05" y="5" font-size="3.6" fill="#000" font-weight="bold">4s1</text></g><g transform="translate(754.51 111.21)"><rect x="0" y="-1.6" width="11.41" height="3.2" fill="#767676"/><rect x="0.23" y="-1.35" width="2.51" height="2.7" fill="#0a0a0a"/><rect x="8.44" y="-1.35" width="2.05" height="2.7" fill="#0a0a0a"/><circle cx="5.71" cy="0" r="1.75" fill="#00ee00" stroke="#0a7a0a" stroke-width=".5"/><text x="1.37" y="-2.3" font-size="3.6" fill="#000" font-weight="bold">sf5</text></g><rect x="766.7" y="107.27" width="44.12" height="8" fill="#fff" stroke="#7a7a7a" stroke-width="1"/><path d="M766.7 115.77V107.27H811.32" stroke="#0a0a0a" stroke-width="1.2" fill="none"/><text transform="translate(767.4 113.32)" font-size="5.75" fill="#464646" stroke="#464646" stroke-width=".1" textLength="10.2" lengthAdjust="spacingAndGlyphs">4b1</text><g transform="translate(731.72 122.61)"><rect x="3.2" y="-1.6" width="8.21" height="3.2" fill="#767676"/><rect x="4.2" y="-.65" width="4.11" height="1.3" fill="#dcdcdc"/><rect x="8.56" y="-1.35" width="1.94" height="2.7" fill="#0a0a0a"/><path d="M1.3 4.8C2.2 3.4 2.9 -2.6 3.9 -4.3C4.2 -4.8 4.7 -4.9 5.1 -4.7" stroke="#8a8a8a" stroke-width="1.55" fill="none"/></g><g transform="translate(743.12 122.61)"><rect x="0" y="-1.6" width="11.41" height="3.2" fill="#767676"/><rect x="0.23" y="-1.35" width="2.51" height="2.7" fill="#0a0a0a"/><rect x="8.44" y="-1.35" width="2.05" height="2.7" fill="#0a0a0a"/><circle cx="5.71" cy="0" r="1.75" fill="#00ee00" stroke="#0a7a0a" stroke-width=".5"/><text x="1.37" y="-2.3" font-size="3.6" fill="#000" font-weight="bold">sf4</text></g><rect x="755.31" y="118.66" width="44.12" height="8" fill="#fff" stroke="#7a7a7a" stroke-width="1"/><path d="M755.31 127.16V118.66H799.93" stroke="#0a0a0a" stroke-width="1.2" fill="none"/><text transform="translate(756.01 124.71)" font-size="5.75" fill="#464646" stroke="#464646" stroke-width=".1" textLength="10.2" lengthAdjust="spacingAndGlyphs">4b2</text><path d="M811.17 110.91L817.16 117.21" stroke="#0a0a0a" stroke-width="2.6" fill="none"/><path d="M811.17 110.91L817.16 117.21" stroke="#e6e6e6" stroke-width="0.88" stroke-dasharray="2.6 1.5" stroke-dashoffset="-1.2" fill="none"/><path d="M799.78 122.31L805.77 128.6" stroke="#0a0a0a" stroke-width="2.6" fill="none"/><path d="M799.78 122.31L805.77 128.6" stroke="#e6e6e6" stroke-width="0.88" stroke-dasharray="2.6 1.5" stroke-dashoffset="-1.2" fill="none"/><g transform="translate(817.16 116.91) rotate(90)"><rect x="0" y="-1.6" width="11.41" height="3.2" fill="#767676"/><rect x="2.74" y="-.65" width="5.71" height="1.3" fill="#d6d6d6"/><rect x="0.23" y="-1.35" width="2.28" height="2.7" fill="#0a0a0a"/><rect x="8.56" y="-1.35" width="1.94" height="2.7" fill="#0a0a0a"/></g><g transform="translate(817.16 128.3) rotate(90)"><rect x="0" y="-1.6" width="11.41" height="3.2" fill="#767676"/><rect x="2.74" y="-.65" width="5.71" height="1.3" fill="#d6d6d6"/><rect x="0.23" y="-1.35" width="2.28" height="2.7" fill="#0a0a0a"/><rect x="8.56" y="-1.35" width="1.94" height="2.7" fill="#0a0a0a"/><path d="M2.59 0L5.39 -2.6V2.6Z" fill="#10c010" stroke="#0a6a0a" stroke-width=".3"/></g><g transform="translate(817.16 139.69) rotate(90)"><rect x="0" y="-1.6" width="11.41" height="3.2" fill="#767676"/><rect x="0.23" y="-1.35" width="2.51" height="2.7" fill="#0a0a0a"/><rect x="8.44" y="-1.35" width="2.05" height="2.7" fill="#0a0a0a"/><circle cx="5.71" cy="0" r="1.75" fill="#00ee00" stroke="#0a7a0a" stroke-width=".5"/><text x="1.37" y="-2.3" font-size="3.6" fill="#000" font-weight="bold">sf6</text></g><g transform="translate(817.16 151.09) rotate(90)"><rect x="0" y="-1.6" width="8.21" height="3.2" fill="#767676"/><rect x="3.42" y="-.65" width="4.11" height="1.3" fill="#dcdcdc"/><rect x="0.23" y="-1.35" width="2.28" height="2.7" fill="#0a0a0a"/><path d="M6.31 4.7C6.71 4.9 7.21 4.8 7.51 4.3C8.51 2.6 9.21 -3.4 10.11 -4.8" stroke="#8a8a8a" stroke-width="1.55" fill="none"/></g><g transform="translate(805.77 128.3) rotate(90)"><rect x="0" y="-1.6" width="11.41" height="3.2" fill="#767676"/><rect x="0.23" y="-1.35" width="2.51" height="2.7" fill="#0a0a0a"/><rect x="8.44" y="-1.35" width="2.05" height="2.7" fill="#0a0a0a"/><circle cx="5.71" cy="0" r="1.75" fill="#00ee00" stroke="#0a7a0a" stroke-width=".5"/><text x="1.37" y="-2.3" font-size="3.6" fill="#000" font-weight="bold">sf7</text></g><g transform="translate(805.77 139.69) rotate(90)"><rect x="0" y="-1.6" width="11.41" height="3.2" fill="#767676"/><rect x="2.74" y="-.65" width="5.71" height="1.3" fill="#d6d6d6"/><rect x="0.23" y="-1.35" width="2.28" height="2.7" fill="#0a0a0a"/><rect x="8.56" y="-1.35" width="1.94" height="2.7" fill="#0a0a0a"/><rect x="3.81" y="1.75" width="7" height="3.5" rx="1.6" fill="#000"/><circle cx="5.01" cy="3.5" r=".95" fill="#7a7410"/><circle cx="7.26" cy="3.5" r=".95" fill="#a01010"/><circle cx="9.51" cy="3.5" r=".95" fill="#00e800"/><path d="M3.81 3.5H1.2M1.2 2V5" stroke="#0a0a0a" stroke-width=".7" fill="none"/><text x="2.05" y="-2.3" font-size="3.6" fill="#000" font-weight="bold">4s2</text></g><g transform="translate(805.77 151.09) rotate(90)"><rect x="0" y="-1.6" width="8.21" height="3.2" fill="#767676"/><rect x="3.42" y="-.65" width="4.11" height="1.3" fill="#dcdcdc"/><rect x="0.23" y="-1.35" width="2.28" height="2.7" fill="#0a0a0a"/><path d="M6.31 4.7C6.71 4.9 7.21 4.8 7.51 4.3C8.51 2.6 9.21 -3.4 10.11 -4.8" stroke="#8a8a8a" stroke-width="1.55" fill="none"/></g><g transform="translate(805.77 162.48) rotate(90)"><rect x="3.2" y="-1.6" width="8.21" height="3.2" fill="#767676"/><rect x="4.2" y="-.65" width="4.11" height="1.3" fill="#dcdcdc"/><rect x="8.56" y="-1.35" width="1.94" height="2.7" fill="#0a0a0a"/><path d="M1.3 4.8C2.2 3.4 2.9 -2.6 3.9 -4.3C4.2 -4.8 4.7 -4.9 5.1 -4.7" stroke="#8a8a8a" stroke-width="1.55" fill="none"/></g><g transform="translate(805.77 173.87) rotate(90)"><rect x="0" y="-1.6" width="11.41" height="3.2" fill="#767676"/><rect x="2.74" y="-.65" width="5.71" height="1.3" fill="#d6d6d6"/><rect x="0.23" y="-1.35" width="2.28" height="2.7" fill="#0a0a0a"/><rect x="8.56" y="-1.35" width="1.94" height="2.7" fill="#0a0a0a"/></g><g transform="translate(805.77 185.26) rotate(90)"><rect x="0" y="-1.6" width="11.41" height="3.2" fill="#767676"/><rect x="2.74" y="-.65" width="5.71" height="1.3" fill="#d6d6d6"/><rect x="0.23" y="-1.35" width="2.28" height="2.7" fill="#0a0a0a"/><rect x="8.56" y="-1.35" width="1.94" height="2.7" fill="#0a0a0a"/></g><g transform="translate(805.77 196.65) rotate(90)"><rect x="0" y="-1.6" width="11.41" height="3.2" fill="#767676"/><rect x="2.74" y="-.65" width="5.71" height="1.3" fill="#d6d6d6"/><rect x="0.23" y="-1.35" width="2.28" height="2.7" fill="#0a0a0a"/><rect x="8.56" y="-1.35" width="1.94" height="2.7" fill="#0a0a0a"/></g><g transform="translate(805.77 208.05) rotate(90)"><rect x="0" y="-1.6" width="11.41" height="3.2" fill="#767676"/><rect x="2.74" y="-.65" width="5.71" height="1.3" fill="#d6d6d6"/><rect x="0.23" y="-1.35" width="2.28" height="2.7" fill="#0a0a0a"/><rect x="8.56" y="-1.35" width="1.94" height="2.7" fill="#0a0a0a"/></g><g transform="translate(817.16 162.48) rotate(90)"><rect x="3.2" y="-1.6" width="8.21" height="3.2" fill="#767676"/><rect x="4.2" y="-.65" width="4.11" height="1.3" fill="#dcdcdc"/><rect x="8.56" y="-1.35" width="1.94" height="2.7" fill="#0a0a0a"/><path d="M1.3 4.8C2.2 3.4 2.9 -2.6 3.9 -4.3C4.2 -4.8 4.7 -4.9 5.1 -4.7" stroke="#8a8a8a" stroke-width="1.55" fill="none"/></g><g transform="translate(817.16 173.87) rotate(90)"><rect x="0" y="-1.6" width="11.41" height="3.2" fill="#767676"/><rect x="2.74" y="-.65" width="5.71" height="1.3" fill="#d6d6d6"/><rect x="0.23" y="-1.35" width="2.28" height="2.7" fill="#0a0a0a"/><rect x="8.56" y="-1.35" width="1.94" height="2.7" fill="#0a0a0a"/></g><g transform="translate(817.16 185.26) rotate(90)"><rect x="0" y="-1.6" width="11.41" height="3.2" fill="#767676"/><rect x="2.74" y="-.65" width="5.71" height="1.3" fill="#d6d6d6"/><rect x="0.23" y="-1.35" width="2.28" height="2.7" fill="#0a0a0a"/><rect x="8.56" y="-1.35" width="1.94" height="2.7" fill="#0a0a0a"/></g><g transform="translate(817.16 196.65) rotate(90)"><rect x="0" y="-1.6" width="11.41" height="3.2" fill="#767676"/><rect x="2.74" y="-.65" width="5.71" height="1.3" fill="#d6d6d6"/><rect x="0.23" y="-1.35" width="2.28" height="2.7" fill="#0a0a0a"/><rect x="8.56" y="-1.35" width="1.94" height="2.7" fill="#0a0a0a"/></g><g transform="translate(817.16 208.05) rotate(90)"><rect x="0" y="-1.6" width="11.41" height="3.2" fill="#767676"/><rect x="2.74" y="-.65" width="5.71" height="1.3" fill="#d6d6d6"/><rect x="0.23" y="-1.35" width="2.28" height="2.7" fill="#0a0a0a"/><rect x="8.56" y="-1.35" width="1.94" height="2.7" fill="#0a0a0a"/></g><g transform="translate(817.16 219.44) rotate(90)"><rect x="0" y="-1.6" width="11.41" height="3.2" fill="#767676"/><rect x="2.74" y="-.65" width="5.71" height="1.3" fill="#d6d6d6"/><rect x="0.23" y="-1.35" width="2.28" height="2.7" fill="#0a0a0a"/><rect x="8.56" y="-1.35" width="1.94" height="2.7" fill="#0a0a0a"/></g><g transform="translate(805.77 219.44) rotate(90)"><rect x="0" y="-1.6" width="11.41" height="3.2" fill="#767676"/><rect x="0.23" y="-1.35" width="10.95" height="2.7" fill="#0a0a0a"/><rect x="2.74" y="-.65" width="5.71" height="1.3" fill="#d6d6d6"/><text x="1.37" y="5" font-size="3.6" fill="#000" font-weight="bold">1s5</text></g><g transform="translate(805.77 230.83) rotate(90)"><rect x="0" y="-1.6" width="11.41" height="3.2" fill="#767676"/><rect x="0.23" y="-1.35" width="2.51" height="2.7" fill="#0a0a0a"/><rect x="8.44" y="-1.35" width="2.05" height="2.7" fill="#0a0a0a"/><circle cx="5.71" cy="0" r="1.75" fill="#00ee00" stroke="#0a7a0a" stroke-width=".5"/></g><g transform="translate(805.77 242.22) rotate(90)"><rect x="0" y="-1.6" width="11.41" height="3.2" fill="#767676"/><rect x="2.74" y="-.65" width="5.71" height="1.3" fill="#d6d6d6"/><rect x="0.23" y="-1.35" width="2.28" height="2.7" fill="#0a0a0a"/><rect x="8.56" y="-1.35" width="1.94" height="2.7" fill="#0a0a0a"/></g><g transform="translate(805.77 253.61) rotate(90)"><rect x="0" y="-1.6" width="11.41" height="3.2" fill="#767676"/><rect x="2.74" y="-.65" width="5.71" height="1.3" fill="#d6d6d6"/><rect x="0.23" y="-1.35" width="2.28" height="2.7" fill="#0a0a0a"/><rect x="8.56" y="-1.35" width="1.94" height="2.7" fill="#0a0a0a"/><rect x="0.3" y="-5.25" width="7.8" height="3.5" rx="1.6" fill="#000"/><circle cx="1.7" cy="-3.5" r=".95" fill="#00e800"/><circle cx="3.95" cy="-3.5" r=".95" fill="#f01010"/><circle cx="6.2" cy="-3.5" r=".95" fill="#5a5410"/><path d="M8.1 -3.5H10.2M10.2 -5V-2" stroke="#0a0a0a" stroke-width=".7" fill="none"/><text x="2.05" y="5" font-size="3.6" fill="#000" font-weight="bold">1s3</text></g><g transform="translate(805.77 265.01) rotate(90)"><rect x="0" y="-1.6" width="11.41" height="3.2" fill="#767676"/><rect x="0.23" y="-1.35" width="2.51" height="2.7" fill="#0a0a0a"/><rect x="8.44" y="-1.35" width="2.05" height="2.7" fill="#0a0a0a"/><circle cx="5.71" cy="0" r="1.75" fill="#00ee00" stroke="#0a7a0a" stroke-width=".5"/><text x="1.37" y="-2.3" font-size="3.6" fill="#000" font-weight="bold">sf1</text></g><g transform="translate(805.77 276.4) rotate(90)"><rect x="0" y="-1.6" width="11.41" height="3.2" fill="#767676"/><rect x="2.74" y="-.65" width="5.71" height="1.3" fill="#d6d6d6"/><rect x="0.23" y="-1.35" width="2.28" height="2.7" fill="#0a0a0a"/><rect x="8.56" y="-1.35" width="1.94" height="2.7" fill="#0a0a0a"/></g><g transform="translate(817.16 230.83) rotate(90)"><rect x="0" y="-1.6" width="11.41" height="3.2" fill="#767676"/><rect x="0.23" y="-1.35" width="10.95" height="2.7" fill="#0a0a0a"/><rect x="2.74" y="-.8" width="6.28" height="1.6" fill="#f4e800"/><text x="1.37" y="-2.3" font-size="3.6" fill="#000" font-weight="bold">1s2</text></g><g transform="translate(817.16 242.22) rotate(90)"><rect x="0" y="-1.6" width="11.41" height="3.2" fill="#767676"/><rect x="2.74" y="-.65" width="5.71" height="1.3" fill="#d6d6d6"/><rect x="0.23" y="-1.35" width="2.28" height="2.7" fill="#0a0a0a"/><rect x="8.56" y="-1.35" width="1.94" height="2.7" fill="#0a0a0a"/></g><g transform="translate(817.16 253.61) rotate(90)"><rect x="0" y="-1.6" width="11.41" height="3.2" fill="#767676"/><rect x="2.74" y="-.65" width="5.71" height="1.3" fill="#d6d6d6"/><rect x="0.23" y="-1.35" width="2.28" height="2.7" fill="#0a0a0a"/><rect x="8.56" y="-1.35" width="1.94" height="2.7" fill="#0a0a0a"/><rect x="0.3" y="-5.25" width="7.8" height="3.5" rx="1.6" fill="#000"/><circle cx="1.7" cy="-3.5" r=".95" fill="#00e800"/><circle cx="3.95" cy="-3.5" r=".95" fill="#f01010"/><circle cx="6.2" cy="-3.5" r=".95" fill="#5a5410"/><path d="M8.1 -3.5H10.2M10.2 -5V-2" stroke="#0a0a0a" stroke-width=".7" fill="none"/><text x="2.05" y="5" font-size="3.6" fill="#000" font-weight="bold">1s1</text></g><g transform="translate(817.16 265.01) rotate(90)"><rect x="0" y="-1.6" width="11.41" height="3.2" fill="#767676"/><rect x="0.23" y="-1.35" width="2.51" height="2.7" fill="#0a0a0a"/><rect x="8.44" y="-1.35" width="2.05" height="2.7" fill="#0a0a0a"/><circle cx="5.71" cy="0" r="1.75" fill="#00ee00" stroke="#0a7a0a" stroke-width=".5"/><text x="1.37" y="-2.3" font-size="3.6" fill="#000" font-weight="bold">sf2</text></g><g transform="translate(817.16 276.4) rotate(90)"><rect x="0" y="-1.6" width="11.41" height="3.2" fill="#767676"/><rect x="2.74" y="-.65" width="5.71" height="1.3" fill="#d6d6d6"/><rect x="0.23" y="-1.35" width="2.28" height="2.7" fill="#0a0a0a"/><rect x="8.56" y="-1.35" width="1.94" height="2.7" fill="#0a0a0a"/></g><g transform="translate(828.56 242.22) rotate(90)"><rect x="0" y="-1.6" width="11.41" height="3.2" fill="#767676"/><rect x="2.74" y="-.65" width="5.71" height="1.3" fill="#d6d6d6"/><rect x="0.23" y="-1.35" width="2.28" height="2.7" fill="#0a0a0a"/><rect x="8.56" y="-1.35" width="1.94" height="2.7" fill="#0a0a0a"/></g><g transform="translate(828.56 253.61) rotate(90)"><rect x="0" y="-1.6" width="11.41" height="3.2" fill="#767676"/><rect x="2.74" y="-.65" width="5.71" height="1.3" fill="#d6d6d6"/><rect x="0.23" y="-1.35" width="2.28" height="2.7" fill="#0a0a0a"/><rect x="8.56" y="-1.35" width="1.94" height="2.7" fill="#0a0a0a"/><rect x="0.3" y="-5.25" width="7.8" height="3.5" rx="1.6" fill="#000"/><circle cx="1.7" cy="-3.5" r=".95" fill="#00e800"/><circle cx="3.95" cy="-3.5" r=".95" fill="#f01010"/><circle cx="6.2" cy="-3.5" r=".95" fill="#5a5410"/><path d="M8.1 -3.5H10.2M10.2 -5V-2" stroke="#0a0a0a" stroke-width=".7" fill="none"/><text x="2.05" y="5" font-size="3.6" fill="#000" font-weight="bold">1s4</text></g><g transform="translate(828.56 265.01) rotate(90)"><rect x="0" y="-1.6" width="11.41" height="3.2" fill="#767676"/><rect x="0.23" y="-1.35" width="2.51" height="2.7" fill="#0a0a0a"/><rect x="8.44" y="-1.35" width="2.05" height="2.7" fill="#0a0a0a"/><circle cx="5.71" cy="0" r="1.75" fill="#00ee00" stroke="#0a7a0a" stroke-width=".5"/><text x="1.37" y="-2.3" font-size="3.6" fill="#000" font-weight="bold">sf3</text></g><g transform="translate(828.56 276.4) rotate(90)"><rect x="0" y="-1.6" width="11.41" height="3.2" fill="#767676"/><rect x="2.74" y="-.65" width="5.71" height="1.3" fill="#d6d6d6"/><rect x="0.23" y="-1.35" width="2.28" height="2.7" fill="#0a0a0a"/><rect x="8.56" y="-1.35" width="1.94" height="2.7" fill="#0a0a0a"/></g><g transform="translate(851.34 162.48) rotate(90)"><rect x="3" y="-1.6" width="8.41" height="3.2" fill="#767676"/><rect x="3.2" y="-.65" width="4.56" height="1.3" fill="#d6d6d6"/><rect x="8.56" y="-1.35" width="1.94" height="2.7" fill="#0a0a0a"/><rect x="2.2" y="-3.6" width="1.8" height="7.2" rx=".6" fill="#0a0a0a"/></g><g transform="translate(851.34 173.87) rotate(90)"><rect x="0" y="-1.6" width="11.41" height="3.2" fill="#767676"/><rect x="0.23" y="-1.35" width="2.51" height="2.7" fill="#0a0a0a"/><rect x="8.44" y="-1.35" width="2.05" height="2.7" fill="#0a0a0a"/><circle cx="5.71" cy="0" r="1.75" fill="#00ee00" stroke="#0a7a0a" stroke-width=".5"/><text x="1.37" y="-2.3" font-size="3.6" fill="#000" font-weight="bold">sf14</text></g><g transform="translate(851.34 185.26) rotate(90)"><rect x="0" y="-1.6" width="11.41" height="3.2" fill="#767676"/><rect x="0.23" y="-1.35" width="2.51" height="2.7" fill="#0a0a0a"/><rect x="8.44" y="-1.35" width="2.05" height="2.7" fill="#0a0a0a"/><circle cx="5.71" cy="0" r="1.75" fill="#00ee00" stroke="#0a7a0a" stroke-width=".5"/><text x="1.37" y="-2.3" font-size="3.6" fill="#000" font-weight="bold">sf13</text></g><rect x="847.09" y="197.3" width="8.3" height="44.13" fill="#c6c6c6" stroke="#585858" stroke-width=".9"/><text transform="translate(850.64 198.9) rotate(90)" font-size="5.75" fill="#404040" stroke="#404040" stroke-width=".1" textLength="35.1" lengthAdjust="spacingAndGlyphs">6b5 CLOSED</text><g transform="translate(851.34 242.22) rotate(90)"><rect x="0" y="-1.6" width="11.41" height="3.2" fill="#767676"/><rect x="0.23" y="-1.35" width="2.51" height="2.7" fill="#0a0a0a"/><rect x="8.44" y="-1.35" width="2.05" height="2.7" fill="#0a0a0a"/><circle cx="5.71" cy="0" r="1.75" fill="#00ee00" stroke="#0a7a0a" stroke-width=".5"/><text x="1.37" y="-2.3" font-size="3.6" fill="#000" font-weight="bold">sf12</text></g><g transform="translate(851.34 253.61) rotate(90)"><rect x="0" y="-1.6" width="11.41" height="3.2" fill="#767676"/><rect x="0.23" y="-1.35" width="10.95" height="2.7" fill="#0a0a0a"/><rect x="2.74" y="-.65" width="5.71" height="1.3" fill="#d6d6d6"/><text x="1.37" y="-2.3" font-size="3.6" fill="#000" font-weight="bold">1s6</text></g><g transform="translate(851.34 265.01) rotate(90)"><rect x="0" y="-1.6" width="11.41" height="3.2" fill="#767676"/><rect x="2.74" y="-.65" width="5.71" height="1.3" fill="#d6d6d6"/><rect x="0.23" y="-1.35" width="2.28" height="2.7" fill="#0a0a0a"/><rect x="8.56" y="-1.35" width="1.94" height="2.7" fill="#0a0a0a"/><rect x="0.3" y="-5.25" width="7.8" height="3.5" rx="1.6" fill="#000"/><circle cx="1.7" cy="-3.5" r=".95" fill="#00e800"/><circle cx="3.95" cy="-3.5" r=".95" fill="#8a1010"/><circle cx="6.2" cy="-3.5" r=".95" fill="#7a7410"/><path d="M8.1 -3.5H10.2M10.2 -5V-2" stroke="#0a0a0a" stroke-width=".7" fill="none"/><text x="2.05" y="5" font-size="3.6" fill="#000" font-weight="bold">1s7</text></g><g transform="translate(851.34 276.4) rotate(90)"><rect x="0" y="-1.6" width="11.41" height="3.2" fill="#767676"/><rect x="0.23" y="-1.35" width="2.51" height="2.7" fill="#0a0a0a"/><rect x="8.44" y="-1.35" width="2.05" height="2.7" fill="#0a0a0a"/><circle cx="5.71" cy="0" r="1.75" fill="#00ee00" stroke="#0a7a0a" stroke-width=".5"/><text x="1.37" y="-2.3" font-size="3.6" fill="#000" font-weight="bold">sf11</text></g><rect x="801.53" y="288.44" width="8.3" height="44.13" fill="#fff" stroke="#7a7a7a" stroke-width="1"/><path d="M801.53 333.07V288.44H810.33" stroke="#0a0a0a" stroke-width="1.2" fill="none"/><text transform="translate(805.08 290.04) rotate(90)" font-size="5.75" fill="#404040" stroke="#404040" stroke-width=".1" textLength="10.68" lengthAdjust="spacingAndGlyphs">6b4</text><g transform="translate(805.77 333.36) rotate(90)"><rect x="0" y="-1.6" width="11.41" height="3.2" fill="#767676"/><rect x="0.23" y="-1.35" width="2.51" height="2.7" fill="#0a0a0a"/><rect x="8.44" y="-1.35" width="2.05" height="2.7" fill="#0a0a0a"/><circle cx="5.71" cy="0" r="1.75" fill="#00ee00" stroke="#0a7a0a" stroke-width=".5"/><text x="1.37" y="-2.3" font-size="3.6" fill="#000" font-weight="bold">sf1</text></g><g transform="translate(805.77 344.75) rotate(90)"><rect x="0" y="-1.6" width="11.41" height="3.2" fill="#767676"/><rect x="0.23" y="-1.35" width="2.51" height="2.7" fill="#0a0a0a"/><rect x="8.44" y="-1.35" width="2.05" height="2.7" fill="#0a0a0a"/><circle cx="5.71" cy="0" r="1.75" fill="#00ee00" stroke="#0a7a0a" stroke-width=".5"/><text x="1.37" y="-2.3" font-size="3.6" fill="#000" font-weight="bold">sf2</text></g><rect x="812.92" y="288.44" width="8.3" height="44.13" fill="#ffc9c9" stroke="#585858" stroke-width=".9"/><text transform="translate(816.47 290.04) rotate(90)" font-size="5.75" fill="#404040" stroke="#404040" stroke-width=".1" textLength="31.24" lengthAdjust="spacingAndGlyphs">6b3 MAT54</text><g transform="translate(817.16 333.36) rotate(90)"><rect x="0" y="-1.6" width="11.41" height="3.2" fill="#767676"/><rect x="0.23" y="-1.35" width="2.51" height="2.7" fill="#0a0a0a"/><rect x="8.44" y="-1.35" width="2.05" height="2.7" fill="#0a0a0a"/><circle cx="5.71" cy="0" r="1.75" fill="#00ee00" stroke="#0a7a0a" stroke-width=".5"/><text x="1.37" y="-2.3" font-size="3.6" fill="#000" font-weight="bold">sf1</text></g><g transform="translate(817.16 344.75) rotate(90)"><rect x="0" y="-1.6" width="11.41" height="3.2" fill="#767676"/><rect x="0.23" y="-1.35" width="2.51" height="2.7" fill="#0a0a0a"/><rect x="8.44" y="-1.35" width="2.05" height="2.7" fill="#0a0a0a"/><circle cx="5.71" cy="0" r="1.75" fill="#00ee00" stroke="#0a7a0a" stroke-width=".5"/><text x="1.37" y="-2.3" font-size="3.6" fill="#000" font-weight="bold">sf2</text></g><rect x="824.31" y="288.44" width="8.3" height="44.13" fill="#ffc9c9" stroke="#585858" stroke-width=".9"/><text transform="translate(827.86 290.04) rotate(90)" font-size="5.75" fill="#404040" stroke="#404040" stroke-width=".1" textLength="34.46" lengthAdjust="spacingAndGlyphs">6b2 NS2418</text><g transform="translate(828.56 333.36) rotate(90)"><rect x="0" y="-1.6" width="11.41" height="3.2" fill="#767676"/><rect x="0.23" y="-1.35" width="2.51" height="2.7" fill="#0a0a0a"/><rect x="8.44" y="-1.35" width="2.05" height="2.7" fill="#0a0a0a"/><circle cx="5.71" cy="0" r="1.75" fill="#00ee00" stroke="#0a7a0a" stroke-width=".5"/><text x="1.37" y="-2.3" font-size="3.6" fill="#000" font-weight="bold">sf1</text></g><g transform="translate(828.56 344.75) rotate(90)"><rect x="0" y="-1.6" width="11.41" height="3.2" fill="#767676"/><rect x="0.23" y="-1.35" width="2.51" height="2.7" fill="#0a0a0a"/><rect x="8.44" y="-1.35" width="2.05" height="2.7" fill="#0a0a0a"/><circle cx="5.71" cy="0" r="1.75" fill="#00ee00" stroke="#0a7a0a" stroke-width=".5"/><text x="1.37" y="-2.3" font-size="3.6" fill="#000" font-weight="bold">sf2</text></g><rect x="847.09" y="288.44" width="8.3" height="44.13" fill="#fff" stroke="#7a7a7a" stroke-width="1"/><path d="M847.09 333.07V288.44H855.89" stroke="#0a0a0a" stroke-width="1.2" fill="none"/><text transform="translate(850.64 290.04) rotate(90)" font-size="5.75" fill="#404040" stroke="#404040" stroke-width=".1" textLength="10.68" lengthAdjust="spacingAndGlyphs">6b1</text><g transform="translate(851.34 333.36) rotate(90)"><rect x="0" y="-1.6" width="11.41" height="3.2" fill="#767676"/><rect x="0.23" y="-1.35" width="2.51" height="2.7" fill="#0a0a0a"/><rect x="8.44" y="-1.35" width="2.05" height="2.7" fill="#0a0a0a"/><circle cx="5.71" cy="0" r="1.75" fill="#00ee00" stroke="#0a7a0a" stroke-width=".5"/><text x="1.37" y="-2.3" font-size="3.6" fill="#000" font-weight="bold">sf1</text></g><g transform="translate(851.34 344.75) rotate(90)"><rect x="0" y="-1.6" width="11.41" height="3.2" fill="#767676"/><rect x="0.23" y="-1.35" width="2.51" height="2.7" fill="#0a0a0a"/><rect x="8.44" y="-1.35" width="2.05" height="2.7" fill="#0a0a0a"/><circle cx="5.71" cy="0" r="1.75" fill="#00ee00" stroke="#0a7a0a" stroke-width=".5"/><text x="1.37" y="-2.3" font-size="3.6" fill="#000" font-weight="bold">sf2</text></g><g transform="translate(805.77 356.14) rotate(90)"><rect x="0" y="-1.6" width="8.21" height="3.2" fill="#767676"/><rect x="3.42" y="-.65" width="4.11" height="1.3" fill="#dcdcdc"/><rect x="0.23" y="-1.35" width="2.28" height="2.7" fill="#0a0a0a"/><path d="M6.31 4.7C6.71 4.9 7.21 4.8 7.51 4.3C8.51 2.6 9.21 -3.4 10.11 -4.8" stroke="#8a8a8a" stroke-width="1.55" fill="none"/></g><g transform="translate(817.16 356.14) rotate(90)"><rect x="0" y="-1.6" width="8.21" height="3.2" fill="#767676"/><rect x="3.42" y="-.65" width="4.11" height="1.3" fill="#dcdcdc"/><rect x="0.23" y="-1.35" width="2.28" height="2.7" fill="#0a0a0a"/><path d="M6.31 4.7C6.71 4.9 7.21 4.8 7.51 4.3C8.51 2.6 9.21 -3.4 10.11 -4.8" stroke="#8a8a8a" stroke-width="1.55" fill="none"/></g><g transform="translate(828.56 356.14) rotate(90)"><rect x="0" y="-1.6" width="9.01" height="3.2" fill="#767676"/><rect x="3.42" y="-.65" width="4.79" height="1.3" fill="#d6d6d6"/><rect x="0.23" y="-1.35" width="2.28" height="2.7" fill="#0a0a0a"/><rect x="7.81" y="-3.6" width="1.8" height="7.2" rx=".6" fill="#0a0a0a"/></g><g transform="translate(851.34 356.14) rotate(90)"><rect x="0" y="-1.6" width="9.01" height="3.2" fill="#767676"/><rect x="3.42" y="-.65" width="4.79" height="1.3" fill="#d6d6d6"/><rect x="0.23" y="-1.35" width="2.28" height="2.7" fill="#0a0a0a"/><rect x="7.81" y="-3.6" width="1.8" height="7.2" rx=".6" fill="#0a0a0a"/></g><path d="M805.77 219.44L851.34 265.01" stroke="#0a0a0a" stroke-width="3" fill="none"/><path d="M805.77 219.44L851.34 265.01" stroke="#e6e6e6" stroke-width="1.02" stroke-dasharray="2.6 1.5" stroke-dashoffset="-1.2" fill="none"/><path d="M806.37 220.04L809.77 223.44" stroke="#0a0a0a" stroke-width="2.8" fill="none"/><path d="M806.37 220.04L809.77 223.44" stroke="#f4e800" stroke-width="1.6" fill="none"/><path d="M848.74 262.41L850.94 264.61" stroke="#0a0a0a" stroke-width="2.8" fill="none"/><path d="M848.74 262.41L850.94 264.61" stroke="#f4e800" stroke-width="1.6" fill="none"/><path d="M816.36 242.82L806.97 252.21" stroke="#0a0a0a" stroke-width="2.8" fill="none"/><path d="M816.36 242.82L806.97 252.21" stroke="#f4e800" stroke-width="1.6" fill="none"/><g transform="translate(469.71 168.17)"><rect x=".3" y="-2.6" width="10.81" height="4.2" fill="#0a0a0a"/><circle cx="5.71" cy="0" r="1.9" fill="#00ee00" stroke="#0a7a0a" stroke-width=".5"/><text x="0.57" y="-2.3" font-size="3.6" fill="#000" font-weight="bold">co1d</text></g><g transform="translate(486.8 162.48) rotate(90)"><rect x="0" y="-1.6" width="11.41" height="3.2" fill="#767676"/><rect x="2.74" y="-.65" width="5.71" height="1.3" fill="#d6d6d6"/><rect x="0.23" y="-1.35" width="2.28" height="2.7" fill="#0a0a0a"/><rect x="8.56" y="-1.35" width="1.94" height="2.7" fill="#0a0a0a"/></g><g transform="translate(486.8 173.87) rotate(90)"><rect x="0" y="-1.6" width="11.41" height="3.2" fill="#767676"/><rect x="2.74" y="-.65" width="5.71" height="1.3" fill="#d6d6d6"/><rect x="0.23" y="-1.35" width="2.28" height="2.7" fill="#0a0a0a"/><rect x="8.56" y="-1.35" width="1.94" height="2.7" fill="#0a0a0a"/></g><g transform="translate(486.8 185.26) rotate(90)"><rect x="0" y="-1.6" width="11.41" height="3.2" fill="#767676"/><rect x="0.23" y="-1.35" width="2.51" height="2.7" fill="#0a0a0a"/><rect x="8.44" y="-1.35" width="2.05" height="2.7" fill="#0a0a0a"/><circle cx="5.71" cy="0" r="1.75" fill="#00ee00" stroke="#0a7a0a" stroke-width=".5"/><text x="1.37" y="5" font-size="3.6" fill="#000" font-weight="bold">sf2a</text></g><g transform="translate(486.8 196.65) rotate(90)"><rect x="0" y="-1.6" width="11.41" height="3.2" fill="#767676"/><rect x="2.74" y="-.65" width="5.71" height="1.3" fill="#d6d6d6"/><rect x="0.23" y="-1.35" width="2.28" height="2.7" fill="#0a0a0a"/><rect x="8.56" y="-1.35" width="1.94" height="2.7" fill="#0a0a0a"/></g><g transform="translate(486.8 208.05) rotate(90)"><rect x="0" y="-1.6" width="11.41" height="3.2" fill="#767676"/><rect x="0.23" y="-1.35" width="10.95" height="2.7" fill="#0a0a0a"/><rect x="2.74" y="-.65" width="5.71" height="1.3" fill="#d6d6d6"/><text x="0.57" y="5" font-size="3.6" fill="#000" font-weight="bold">sw1</text></g><g transform="translate(486.8 219.44) rotate(90)"><rect x="0" y="-1.6" width="11.41" height="3.2" fill="#767676"/><rect x="0.23" y="-1.35" width="2.51" height="2.7" fill="#0a0a0a"/><rect x="8.44" y="-1.35" width="2.05" height="2.7" fill="#0a0a0a"/><circle cx="5.71" cy="0" r="1.75" fill="#00ee00" stroke="#0a7a0a" stroke-width=".5"/><text x="1.37" y="5" font-size="3.6" fill="#000" font-weight="bold">sf1b</text></g><g transform="translate(486.8 230.83) rotate(90)"><rect x="0" y="-1.6" width="11.41" height="3.2" fill="#767676"/><rect x="2.74" y="-.65" width="5.71" height="1.3" fill="#d6d6d6"/><rect x="0.23" y="-1.35" width="2.28" height="2.7" fill="#0a0a0a"/><rect x="8.56" y="-1.35" width="1.94" height="2.7" fill="#0a0a0a"/></g><g transform="translate(492.49 213.74)"><rect x="0" y="-1.6" width="11.41" height="3.2" fill="#767676"/><rect x="0.23" y="-1.35" width="2.51" height="2.7" fill="#0a0a0a"/><rect x="8.44" y="-1.35" width="2.05" height="2.7" fill="#0a0a0a"/><circle cx="5.71" cy="0" r="1.75" fill="#00ee00" stroke="#0a7a0a" stroke-width=".5"/><text x="1.37" y="-2.3" font-size="3.6" fill="#000" font-weight="bold">sf2a</text></g><g transform="translate(503.88 213.74)"><rect x="0" y="-1.6" width="11.41" height="3.2" fill="#767676"/><rect x="2.74" y="-.65" width="5.71" height="1.3" fill="#d6d6d6"/><rect x="0.23" y="-1.35" width="2.28" height="2.7" fill="#0a0a0a"/><rect x="8.56" y="-1.35" width="1.94" height="2.7" fill="#0a0a0a"/></g><path d="M487.6 209.55L491.1 213.05" stroke="#0a0a0a" stroke-width="2.8" fill="none"/><path d="M487.6 209.55L491.1 213.05" stroke="#f4e800" stroke-width="1.6" fill="none"/><g transform="translate(515.28 213.74)"><rect x="3.6" y="-1.6" width="7.81" height="3.2" fill="#767676"/><rect x="4.2" y="-.65" width="3.42" height="1.3" fill="#dcdcdc"/><rect x="7.07" y="-1.35" width="3.88" height="2.7" fill="#0a0a0a"/><path d="M3.4 1.6V-2.4Q3.5 -3.8 5.2 -3.8" stroke="#8a8a8a" stroke-width="1" fill="none"/></g><g transform="translate(526.67 213.74)"><rect x="0" y="-1.6" width="11.41" height="3.2" fill="#767676"/><rect x="0.23" y="-1.35" width="2.51" height="2.7" fill="#0a0a0a"/><rect x="8.44" y="-1.35" width="2.05" height="2.7" fill="#0a0a0a"/><circle cx="5.71" cy="0" r="1.75" fill="#00ee00" stroke="#0a7a0a" stroke-width=".5"/><text x="1.37" y="-2.3" font-size="3.6" fill="#000" font-weight="bold">sf1</text></g><rect x="539.51" y="163.13" width="8.3" height="44.13" fill="#fff" stroke="#7a7a7a" stroke-width="1"/><path d="M539.51 207.76V163.13H548.31" stroke="#0a0a0a" stroke-width="1.2" fill="none"/><text transform="translate(545.66 205.86) rotate(-90)" font-size="5.75" fill="#404040" stroke="#404040" stroke-width=".1" textLength="10.68" lengthAdjust="spacingAndGlyphs">7b1</text><rect x="550.9" y="163.13" width="8.3" height="44.13" fill="#fff" stroke="#7a7a7a" stroke-width="1"/><path d="M550.9 207.76V163.13H559.7" stroke="#0a0a0a" stroke-width="1.2" fill="none"/><text transform="translate(557.05 205.86) rotate(-90)" font-size="5.75" fill="#404040" stroke="#404040" stroke-width=".1" textLength="10.68" lengthAdjust="spacingAndGlyphs">7b2</text><rect x="562.29" y="163.13" width="8.3" height="44.13" fill="#fff" stroke="#7a7a7a" stroke-width="1"/><path d="M562.29 207.76V163.13H571.09" stroke="#0a0a0a" stroke-width="1.2" fill="none"/><text transform="translate(568.44 205.86) rotate(-90)" font-size="5.75" fill="#404040" stroke="#404040" stroke-width=".1" textLength="10.68" lengthAdjust="spacingAndGlyphs">7b3</text><rect x="573.69" y="163.13" width="8.3" height="44.13" fill="#ffc9c9" stroke="#585858" stroke-width=".9"/><text transform="translate(579.84 205.86) rotate(-90)" font-size="5.75" fill="#404040" stroke="#404040" stroke-width=".1" textLength="34.46" lengthAdjust="spacingAndGlyphs">7b4 NS1110</text><rect x="585.08" y="163.13" width="8.3" height="44.13" fill="#ffc9c9" stroke="#585858" stroke-width=".9"/><text transform="translate(591.23 205.86) rotate(-90)" font-size="5.75" fill="#404040" stroke="#404040" stroke-width=".1" textLength="34.46" lengthAdjust="spacingAndGlyphs">7b5 NS2225</text><rect x="596.47" y="163.13" width="8.3" height="44.13" fill="#ffc9c9" stroke="#585858" stroke-width=".9"/><text transform="translate(602.62 205.86) rotate(-90)" font-size="5.75" fill="#404040" stroke="#404040" stroke-width=".1" textLength="30.88" lengthAdjust="spacingAndGlyphs">7b6 BR216</text><rect x="607.86" y="163.13" width="8.3" height="44.13" fill="#fff" stroke="#7a7a7a" stroke-width="1"/><path d="M607.86 207.76V163.13H616.66" stroke="#0a0a0a" stroke-width="1.2" fill="none"/><text transform="translate(614.01 205.86) rotate(-90)" font-size="5.75" fill="#404040" stroke="#404040" stroke-width=".1" textLength="10.68" lengthAdjust="spacingAndGlyphs">7b7</text><rect x="619.25" y="163.13" width="8.3" height="44.13" fill="#ffc9c9" stroke="#585858" stroke-width=".9"/><text transform="translate(625.4 205.86) rotate(-90)" font-size="5.75" fill="#404040" stroke="#404040" stroke-width=".1" textLength="34.46" lengthAdjust="spacingAndGlyphs">7b8 NS2404</text><rect x="630.65" y="163.13" width="8.3" height="44.13" fill="#ffc9c9" stroke="#585858" stroke-width=".9"/><text transform="translate(636.8 205.86) rotate(-90)" font-size="5.75" fill="#404040" stroke="#404040" stroke-width=".1" textLength="29.13" lengthAdjust="spacingAndGlyphs">7b9 Talent</text><rect x="642.04" y="163.13" width="8.3" height="44.13" fill="#ffc9c9" stroke="#585858" stroke-width=".9"/><text transform="translate(648.19 205.86) rotate(-90)" font-size="5.75" fill="#404040" stroke="#404040" stroke-width=".1" textLength="38.02" lengthAdjust="spacingAndGlyphs">7b10 NS2433</text><rect x="653.43" y="163.13" width="8.3" height="44.13" fill="#ffc9c9" stroke="#585858" stroke-width=".9"/><text transform="translate(659.58 205.86) rotate(-90)" font-size="5.75" fill="#404040" stroke="#404040" stroke-width=".1" textLength="26.7" lengthAdjust="spacingAndGlyphs">7b11 Köff</text><rect x="538.36" y="208.95" width="124.91" height="9.51" rx="4.7" fill="#fff" stroke="#555" stroke-width="1"/><text transform="translate(540.06 215.74)" font-size="5.75" fill="#444" stroke="#444" stroke-width=".1" textLength="38.62" lengthAdjust="spacingAndGlyphs">7fy1: CLOSED</text><g transform="translate(663.37 213.74)"><rect x="0" y="-1.6" width="11.41" height="3.2" fill="#767676"/><rect x="0.23" y="-1.35" width="2.51" height="2.7" fill="#0a0a0a"/><rect x="8.44" y="-1.35" width="2.05" height="2.7" fill="#0a0a0a"/><circle cx="5.71" cy="0" r="1.75" fill="#00ee00" stroke="#0a7a0a" stroke-width=".5"/><text x="1.37" y="-2.3" font-size="3.6" fill="#000" font-weight="bold">sf3</text></g><g transform="translate(674.76 213.74)"><rect x="0" y="-1.6" width="8.21" height="3.2" fill="#767676"/><rect x="3.42" y="-.65" width="4.11" height="1.3" fill="#dcdcdc"/><rect x="0.23" y="-1.35" width="2.28" height="2.7" fill="#0a0a0a"/><path d="M6.31 4.7C6.71 4.9 7.21 4.8 7.51 4.3C8.51 2.6 9.21 -3.4 10.11 -4.8" stroke="#8a8a8a" stroke-width="1.55" fill="none"/></g><rect x="675.96" y="163.68" width="8.8" height="8.8" fill="#c4c4c4"/><rect x="677.76" y="165.48" width="5.2" height="5.2" fill="#14ee14" stroke="#3a4a3a" stroke-width=".7"/><rect x="675.96" y="175.07" width="8.8" height="8.8" fill="#c4c4c4"/><rect x="677.76" y="176.87" width="5.2" height="5.2" fill="#14ee14" stroke="#3a4a3a" stroke-width=".7"/><rect x="675.96" y="186.46" width="8.8" height="8.8" fill="#c4c4c4"/><rect x="677.76" y="188.26" width="5.2" height="5.2" fill="#14ee14" stroke="#3a4a3a" stroke-width=".7"/><rect x="675.96" y="197.85" width="8.8" height="8.8" fill="#c4c4c4"/><rect x="677.76" y="199.65" width="5.2" height="5.2" fill="#14ee14" stroke="#3a4a3a" stroke-width=".7"/><rect x="664.57" y="197.85" width="8.8" height="8.8" fill="#c4c4c4"/><rect x="666.37" y="199.65" width="5.2" height="5.2" fill="#14ee14" stroke="#3a4a3a" stroke-width=".7"/><g transform="translate(475.4 242.22) rotate(90)"><rect x="0.34" y="-1.35" width="10.73" height="2.7" rx=".6" fill="#0a0a0a"/><circle cx="5.71" cy="0" r="1.75" fill="#00ee00" stroke="#0a7a0a" stroke-width=".5"/><text x="0.23" y="5" font-size="3.6" fill="#000" font-weight="bold">20</text></g><g transform="translate(486.8 242.22) rotate(90)"><rect x="0.34" y="-1.35" width="10.73" height="2.7" rx=".6" fill="#0a0a0a"/><circle cx="5.71" cy="0" r="1.75" fill="#00ee00" stroke="#0a7a0a" stroke-width=".5"/><text x="0.23" y="5" font-size="3.6" fill="#000" font-weight="bold">21</text></g><rect x="471.5" y="253.61" width="5.8" height="45.57" fill="#d6d6d6"/><path d="M471.8 253.61V299.18" stroke="#8c8c8c" stroke-width=".6"/><path d="M474.1 253.61V299.18" stroke="#8c8c8c" stroke-width=".6"/><path d="M476.7 253.61V299.18" stroke="#8c8c8c" stroke-width=".6"/><path d="M475.4 253.61V299.18" stroke="#3c3c3c" stroke-width="1.25"/><path d="M475.4 251.41V257.01M475.4 295.78V301.38" stroke="#000" stroke-width="2.5"/><rect x="484.9" y="253.61" width="5.8" height="45.57" fill="#d6d6d6"/><path d="M490.4 253.61V299.18" stroke="#8c8c8c" stroke-width=".6"/><path d="M488.1 253.61V299.18" stroke="#8c8c8c" stroke-width=".6"/><path d="M485.5 253.61V299.18" stroke="#8c8c8c" stroke-width=".6"/><path d="M486.8 253.61V299.18" stroke="#3c3c3c" stroke-width="1.25"/><path d="M486.8 251.41V257.01M486.8 295.78V301.38" stroke="#000" stroke-width="2.5"/><path d="M471.5 253.61H490.7" stroke="#444" stroke-width=".6"/><g transform="translate(475.4 299.18) rotate(90)"><rect x="0.34" y="-1.35" width="10.73" height="2.7" rx=".6" fill="#0a0a0a"/><circle cx="5.71" cy="0" r="1.75" fill="#00ee00" stroke="#0a7a0a" stroke-width=".5"/><text x="0.23" y="5" font-size="3.6" fill="#000" font-weight="bold">20</text></g><g transform="translate(486.8 299.18) rotate(90)"><rect x="0.34" y="-1.35" width="10.73" height="2.7" rx=".6" fill="#0a0a0a"/><circle cx="5.71" cy="0" r="1.75" fill="#00ee00" stroke="#0a7a0a" stroke-width=".5"/><text x="0.23" y="5" font-size="3.6" fill="#000" font-weight="bold">21</text></g><g transform="translate(486.8 310.57) rotate(90)"><rect x="0.34" y="-1.35" width="10.73" height="2.7" rx=".6" fill="#0a0a0a"/><circle cx="5.71" cy="0" r="1.75" fill="#00ee00" stroke="#0a7a0a" stroke-width=".5"/><text x="0.23" y="5" font-size="3.6" fill="#000" font-weight="bold">sf18</text></g><g transform="translate(486.8 321.97) rotate(90)"><rect x="0.34" y="-1.35" width="10.73" height="2.7" rx=".6" fill="#0a0a0a"/><circle cx="5.71" cy="0" r="1.75" fill="#00ee00" stroke="#0a7a0a" stroke-width=".5"/><text x="0.23" y="5" font-size="3.6" fill="#000" font-weight="bold">sf17</text></g><g transform="translate(486.8 390.32) rotate(90)"><rect x="0.34" y="-1.35" width="10.73" height="2.7" rx=".6" fill="#0a0a0a"/><circle cx="5.71" cy="0" r="1.75" fill="#00ee00" stroke="#0a7a0a" stroke-width=".5"/><text x="0.23" y="5" font-size="3.6" fill="#000" font-weight="bold">sf16</text></g><g transform="translate(486.8 401.71) rotate(90)"><rect x="0.34" y="-1.35" width="10.73" height="2.7" rx=".6" fill="#0a0a0a"/><circle cx="5.71" cy="0" r="1.75" fill="#00ee00" stroke="#0a7a0a" stroke-width=".5"/><text x="0.23" y="5" font-size="3.6" fill="#000" font-weight="bold">sf15</text></g><g transform="translate(378.57 350.45)"><rect x="0.34" y="-1.35" width="10.73" height="2.7" rx=".6" fill="#0a0a0a"/><circle cx="5.71" cy="0" r="1.75" fill="#00ee00" stroke="#0a7a0a" stroke-width=".5"/><text x="0.23" y="-2.3" font-size="3.6" fill="#000" font-weight="bold">sfb21</text></g><rect x="390.76" y="346.5" width="44.12" height="8" fill="#fff" stroke="#7a7a7a" stroke-width="1"/><path d="M390.76 355V346.5H435.38" stroke="#0a0a0a" stroke-width="1.2" fill="none"/><text transform="translate(391.46 352.55)" font-size="5.75" fill="#464646" stroke="#464646" stroke-width=".1" textLength="13.61" lengthAdjust="spacingAndGlyphs">8b22</text><g transform="translate(435.53 350.45)"><rect x="0.34" y="-1.35" width="10.73" height="2.7" rx=".6" fill="#0a0a0a"/><circle cx="5.71" cy="0" r="1.75" fill="#00ee00" stroke="#0a7a0a" stroke-width=".5"/><text x="0.23" y="-2.3" font-size="3.6" fill="#000" font-weight="bold">sfb2</text></g><g transform="translate(446.92 350.45)"><rect x="0.34" y="-1.35" width="10.73" height="2.7" rx=".6" fill="#0a0a0a"/><circle cx="5.71" cy="0" r="1.75" fill="#00ee00" stroke="#0a7a0a" stroke-width=".5"/><text x="0.23" y="-2.3" font-size="3.6" fill="#000" font-weight="bold">sfa2</text></g><g transform="translate(515.28 350.45)"><rect x="0.34" y="-1.35" width="10.73" height="2.7" rx=".6" fill="#0a0a0a"/><circle cx="5.71" cy="0" r="1.75" fill="#00ee00" stroke="#0a7a0a" stroke-width=".5"/><text x="0.23" y="-2.3" font-size="3.6" fill="#000" font-weight="bold">sf6</text></g><g transform="translate(526.67 350.45)"><rect x="0.34" y="-1.35" width="10.73" height="2.7" rx=".6" fill="#0a0a0a"/><circle cx="5.71" cy="0" r="1.75" fill="#00ee00" stroke="#0a7a0a" stroke-width=".5"/><text x="0.23" y="-2.3" font-size="3.6" fill="#000" font-weight="bold">sf5</text></g><rect x="538.86" y="346.5" width="44.12" height="8" fill="#fff" stroke="#7a7a7a" stroke-width="1"/><path d="M538.86 355V346.5H583.48" stroke="#0a0a0a" stroke-width="1.2" fill="none"/><text transform="translate(539.56 352.55)" font-size="5.75" fill="#464646" stroke="#464646" stroke-width=".1" textLength="10.2" lengthAdjust="spacingAndGlyphs">8b2</text><g transform="translate(583.63 350.45)"><rect x="0.34" y="-1.35" width="10.73" height="2.7" rx=".6" fill="#0a0a0a"/><circle cx="5.71" cy="0" r="1.75" fill="#00ee00" stroke="#0a7a0a" stroke-width=".5"/><text x="0.23" y="-2.3" font-size="3.6" fill="#000" font-weight="bold">sfb4</text></g><g transform="translate(378.57 361.84)"><rect x="0.34" y="-1.35" width="10.73" height="2.7" rx=".6" fill="#0a0a0a"/><circle cx="5.71" cy="0" r="1.75" fill="#00ee00" stroke="#0a7a0a" stroke-width=".5"/><text x="0.23" y="-2.3" font-size="3.6" fill="#000" font-weight="bold">sfb21</text></g><rect x="390.76" y="357.89" width="44.12" height="8" fill="#fff" stroke="#7a7a7a" stroke-width="1"/><path d="M390.76 366.39V357.89H435.38" stroke="#0a0a0a" stroke-width="1.2" fill="none"/><text transform="translate(391.46 363.94)" font-size="5.75" fill="#464646" stroke="#464646" stroke-width=".1" textLength="13.61" lengthAdjust="spacingAndGlyphs">8b24</text><g transform="translate(435.53 361.84)"><rect x="0.34" y="-1.35" width="10.73" height="2.7" rx=".6" fill="#0a0a0a"/><circle cx="5.71" cy="0" r="1.75" fill="#00ee00" stroke="#0a7a0a" stroke-width=".5"/><text x="0.23" y="-2.3" font-size="3.6" fill="#000" font-weight="bold">sfb2</text></g><g transform="translate(446.92 361.84)"><rect x="0.34" y="-1.35" width="10.73" height="2.7" rx=".6" fill="#0a0a0a"/><circle cx="5.71" cy="0" r="1.75" fill="#00ee00" stroke="#0a7a0a" stroke-width=".5"/><text x="0.23" y="-2.3" font-size="3.6" fill="#000" font-weight="bold">sfa2</text></g><g transform="translate(515.28 361.84)"><rect x="0.34" y="-1.35" width="10.73" height="2.7" rx=".6" fill="#0a0a0a"/><circle cx="5.71" cy="0" r="1.75" fill="#00ee00" stroke="#0a7a0a" stroke-width=".5"/><text x="0.23" y="-2.3" font-size="3.6" fill="#000" font-weight="bold">sf6</text></g><g transform="translate(526.67 361.84)"><rect x="0.34" y="-1.35" width="10.73" height="2.7" rx=".6" fill="#0a0a0a"/><circle cx="5.71" cy="0" r="1.75" fill="#00ee00" stroke="#0a7a0a" stroke-width=".5"/><text x="0.23" y="-2.3" font-size="3.6" fill="#000" font-weight="bold">sf5</text></g><rect x="538.86" y="357.89" width="44.12" height="8" fill="#fff" stroke="#7a7a7a" stroke-width="1"/><path d="M538.86 366.39V357.89H583.48" stroke="#0a0a0a" stroke-width="1.2" fill="none"/><text transform="translate(539.56 363.94)" font-size="5.75" fill="#464646" stroke="#464646" stroke-width=".1" textLength="10.2" lengthAdjust="spacingAndGlyphs">8b0</text><g transform="translate(583.63 361.84)"><rect x="0.34" y="-1.35" width="10.73" height="2.7" rx=".6" fill="#0a0a0a"/><circle cx="5.71" cy="0" r="1.75" fill="#00ee00" stroke="#0a7a0a" stroke-width=".5"/><text x="0.23" y="-2.3" font-size="3.6" fill="#000" font-weight="bold">sfb4</text></g><g transform="translate(378.57 373.23)"><rect x="0.34" y="-1.35" width="10.73" height="2.7" rx=".6" fill="#0a0a0a"/><circle cx="5.71" cy="0" r="1.75" fill="#00ee00" stroke="#0a7a0a" stroke-width=".5"/><text x="0.23" y="-2.3" font-size="3.6" fill="#000" font-weight="bold">sfb21</text></g><rect x="390.76" y="369.28" width="44.12" height="8" fill="#fff" stroke="#7a7a7a" stroke-width="1"/><path d="M390.76 377.78V369.28H435.38" stroke="#0a0a0a" stroke-width="1.2" fill="none"/><text transform="translate(391.46 375.33)" font-size="5.75" fill="#464646" stroke="#464646" stroke-width=".1" textLength="13.61" lengthAdjust="spacingAndGlyphs">8b26</text><g transform="translate(435.53 373.23)"><rect x="0.34" y="-1.35" width="10.73" height="2.7" rx=".6" fill="#0a0a0a"/><circle cx="5.71" cy="0" r="1.75" fill="#00ee00" stroke="#0a7a0a" stroke-width=".5"/><text x="0.23" y="-2.3" font-size="3.6" fill="#000" font-weight="bold">sfb2</text></g><g transform="translate(446.92 373.23)"><rect x="0.34" y="-1.35" width="10.73" height="2.7" rx=".6" fill="#0a0a0a"/><circle cx="5.71" cy="0" r="1.75" fill="#00ee00" stroke="#0a7a0a" stroke-width=".5"/><text x="0.23" y="-2.3" font-size="3.6" fill="#000" font-weight="bold">sfa2</text></g><g transform="translate(515.28 373.23)"><rect x="0.34" y="-1.35" width="10.73" height="2.7" rx=".6" fill="#0a0a0a"/><circle cx="5.71" cy="0" r="1.75" fill="#00ee00" stroke="#0a7a0a" stroke-width=".5"/><text x="0.23" y="-2.3" font-size="3.6" fill="#000" font-weight="bold">sf6</text></g><g transform="translate(526.67 373.23)"><rect x="0.34" y="-1.35" width="10.73" height="2.7" rx=".6" fill="#0a0a0a"/><circle cx="5.71" cy="0" r="1.75" fill="#00ee00" stroke="#0a7a0a" stroke-width=".5"/><text x="0.23" y="-2.3" font-size="3.6" fill="#000" font-weight="bold">sf5</text></g><rect x="538.86" y="369.28" width="44.12" height="8" fill="#fff" stroke="#7a7a7a" stroke-width="1"/><path d="M538.86 377.78V369.28H583.48" stroke="#0a0a0a" stroke-width="1.2" fill="none"/><text transform="translate(539.56 375.33)" font-size="5.75" fill="#464646" stroke="#464646" stroke-width=".1" textLength="13.61" lengthAdjust="spacingAndGlyphs">8b46</text><g transform="translate(583.63 373.23)"><rect x="0.34" y="-1.35" width="10.73" height="2.7" rx=".6" fill="#0a0a0a"/><circle cx="5.71" cy="0" r="1.75" fill="#00ee00" stroke="#0a7a0a" stroke-width=".5"/><text x="0.23" y="-2.3" font-size="3.6" fill="#000" font-weight="bold">sfb4</text></g><g transform="translate(503.88 396.01)"><rect x="0.34" y="-1.35" width="10.73" height="2.7" rx=".6" fill="#0a0a0a"/><circle cx="5.71" cy="0" r="1.75" fill="#00ee00" stroke="#0a7a0a" stroke-width=".5"/><text x="0.23" y="-2.3" font-size="3.6" fill="#000" font-weight="bold">sfb1a</text></g><rect x="516.08" y="392.07" width="44.12" height="8" fill="#fff" stroke="#7a7a7a" stroke-width="1"/><path d="M516.08 400.57V392.07H560.69" stroke="#0a0a0a" stroke-width="1.2" fill="none"/><text transform="translate(516.78 398.12)" font-size="5.75" fill="#464646" stroke="#464646" stroke-width=".1" textLength="11" lengthAdjust="spacingAndGlyphs">8tt1</text><g transform="translate(560.84 396.01)"><rect x="0.34" y="-1.35" width="10.73" height="2.7" rx=".6" fill="#0a0a0a"/><circle cx="5.71" cy="0" r="1.75" fill="#00ee00" stroke="#0a7a0a" stroke-width=".5"/><text x="0.23" y="-2.3" font-size="3.6" fill="#000" font-weight="bold">sfb1</text></g><text transform="translate(516.5 386.3)" font-size="5.75" fill="#444" stroke="#444" stroke-width=".1" textLength="32.67" lengthAdjust="spacingAndGlyphs">Bridge Block</text><circle cx="486.8" cy="361.84" r="28.3" fill="none" stroke="#ececec" stroke-width=".8"/><path d="M486.8 347.64L486.8 334.84" stroke="#b5b5b5" stroke-width="1.3"/><path d="M486.8 376.04L486.8 388.84" stroke="#b5b5b5" stroke-width="1.3"/><path d="M501 361.84L514.8 361.84" stroke="#c4c4c4" stroke-width="1.3"/><path d="M500.51 358.16L513.84 354.59" stroke="#c4c4c4" stroke-width="1.3"/><path d="M500.51 365.51L513.84 369.08" stroke="#c4c4c4" stroke-width="1.3"/><path d="M472.6 361.84L458.8 361.84" stroke="#c4c4c4" stroke-width="1.3"/><path d="M473.08 365.51L459.75 369.08" stroke="#c4c4c4" stroke-width="1.3"/><path d="M473.08 358.16L459.75 354.59" stroke="#e01010" stroke-width="1.5"/><circle cx="486.8" cy="361.84" r="13" fill="#fff" stroke="#4a4a4a" stroke-width="1"/><circle cx="486.8" cy="361.84" r="11.6" fill="none" stroke="#7a7a7a" stroke-width=".8"/><g transform="translate(486.8 361.84) rotate(16)"><rect x="-12" y="-2.6" width="24" height="5.2" fill="#fff" stroke="#222" stroke-width=".8"/><rect x="-7.2" y="-1.7" width="14.4" height="3.4" fill="#14dc14" stroke="#0a0a0a" stroke-width=".9"/></g></g><text x="266.2" y="220.9" font-size="11.4" fill="#111" stroke="#111" stroke-width=".3" textLength="46.2" lengthAdjust="spacingAndGlyphs">&quot;Plan-F&quot;</text><text x="279.8" y="249.9" font-size="22.8" fill="#111" stroke="#111" stroke-width=".3" textLength="12.2" lengthAdjust="spacingAndGlyphs">R</text><text x="291.6" y="241.6" font-size="14" fill="#111" stroke="#111" stroke-width=".3" textLength="37.2" lengthAdjust="spacingAndGlyphs">ocrail</text><path d="M267 242.5H338" stroke="#111" stroke-width=".7"/><path d="M340.4 242.5l-4.2-1.5v3z" fill="#111"/><text x="304.2" y="247.9" font-size="4.2" fill="#222" textLength="23.6" lengthAdjust="spacingAndGlyphs">©rocrail.net</text></svg>
</body></html>
